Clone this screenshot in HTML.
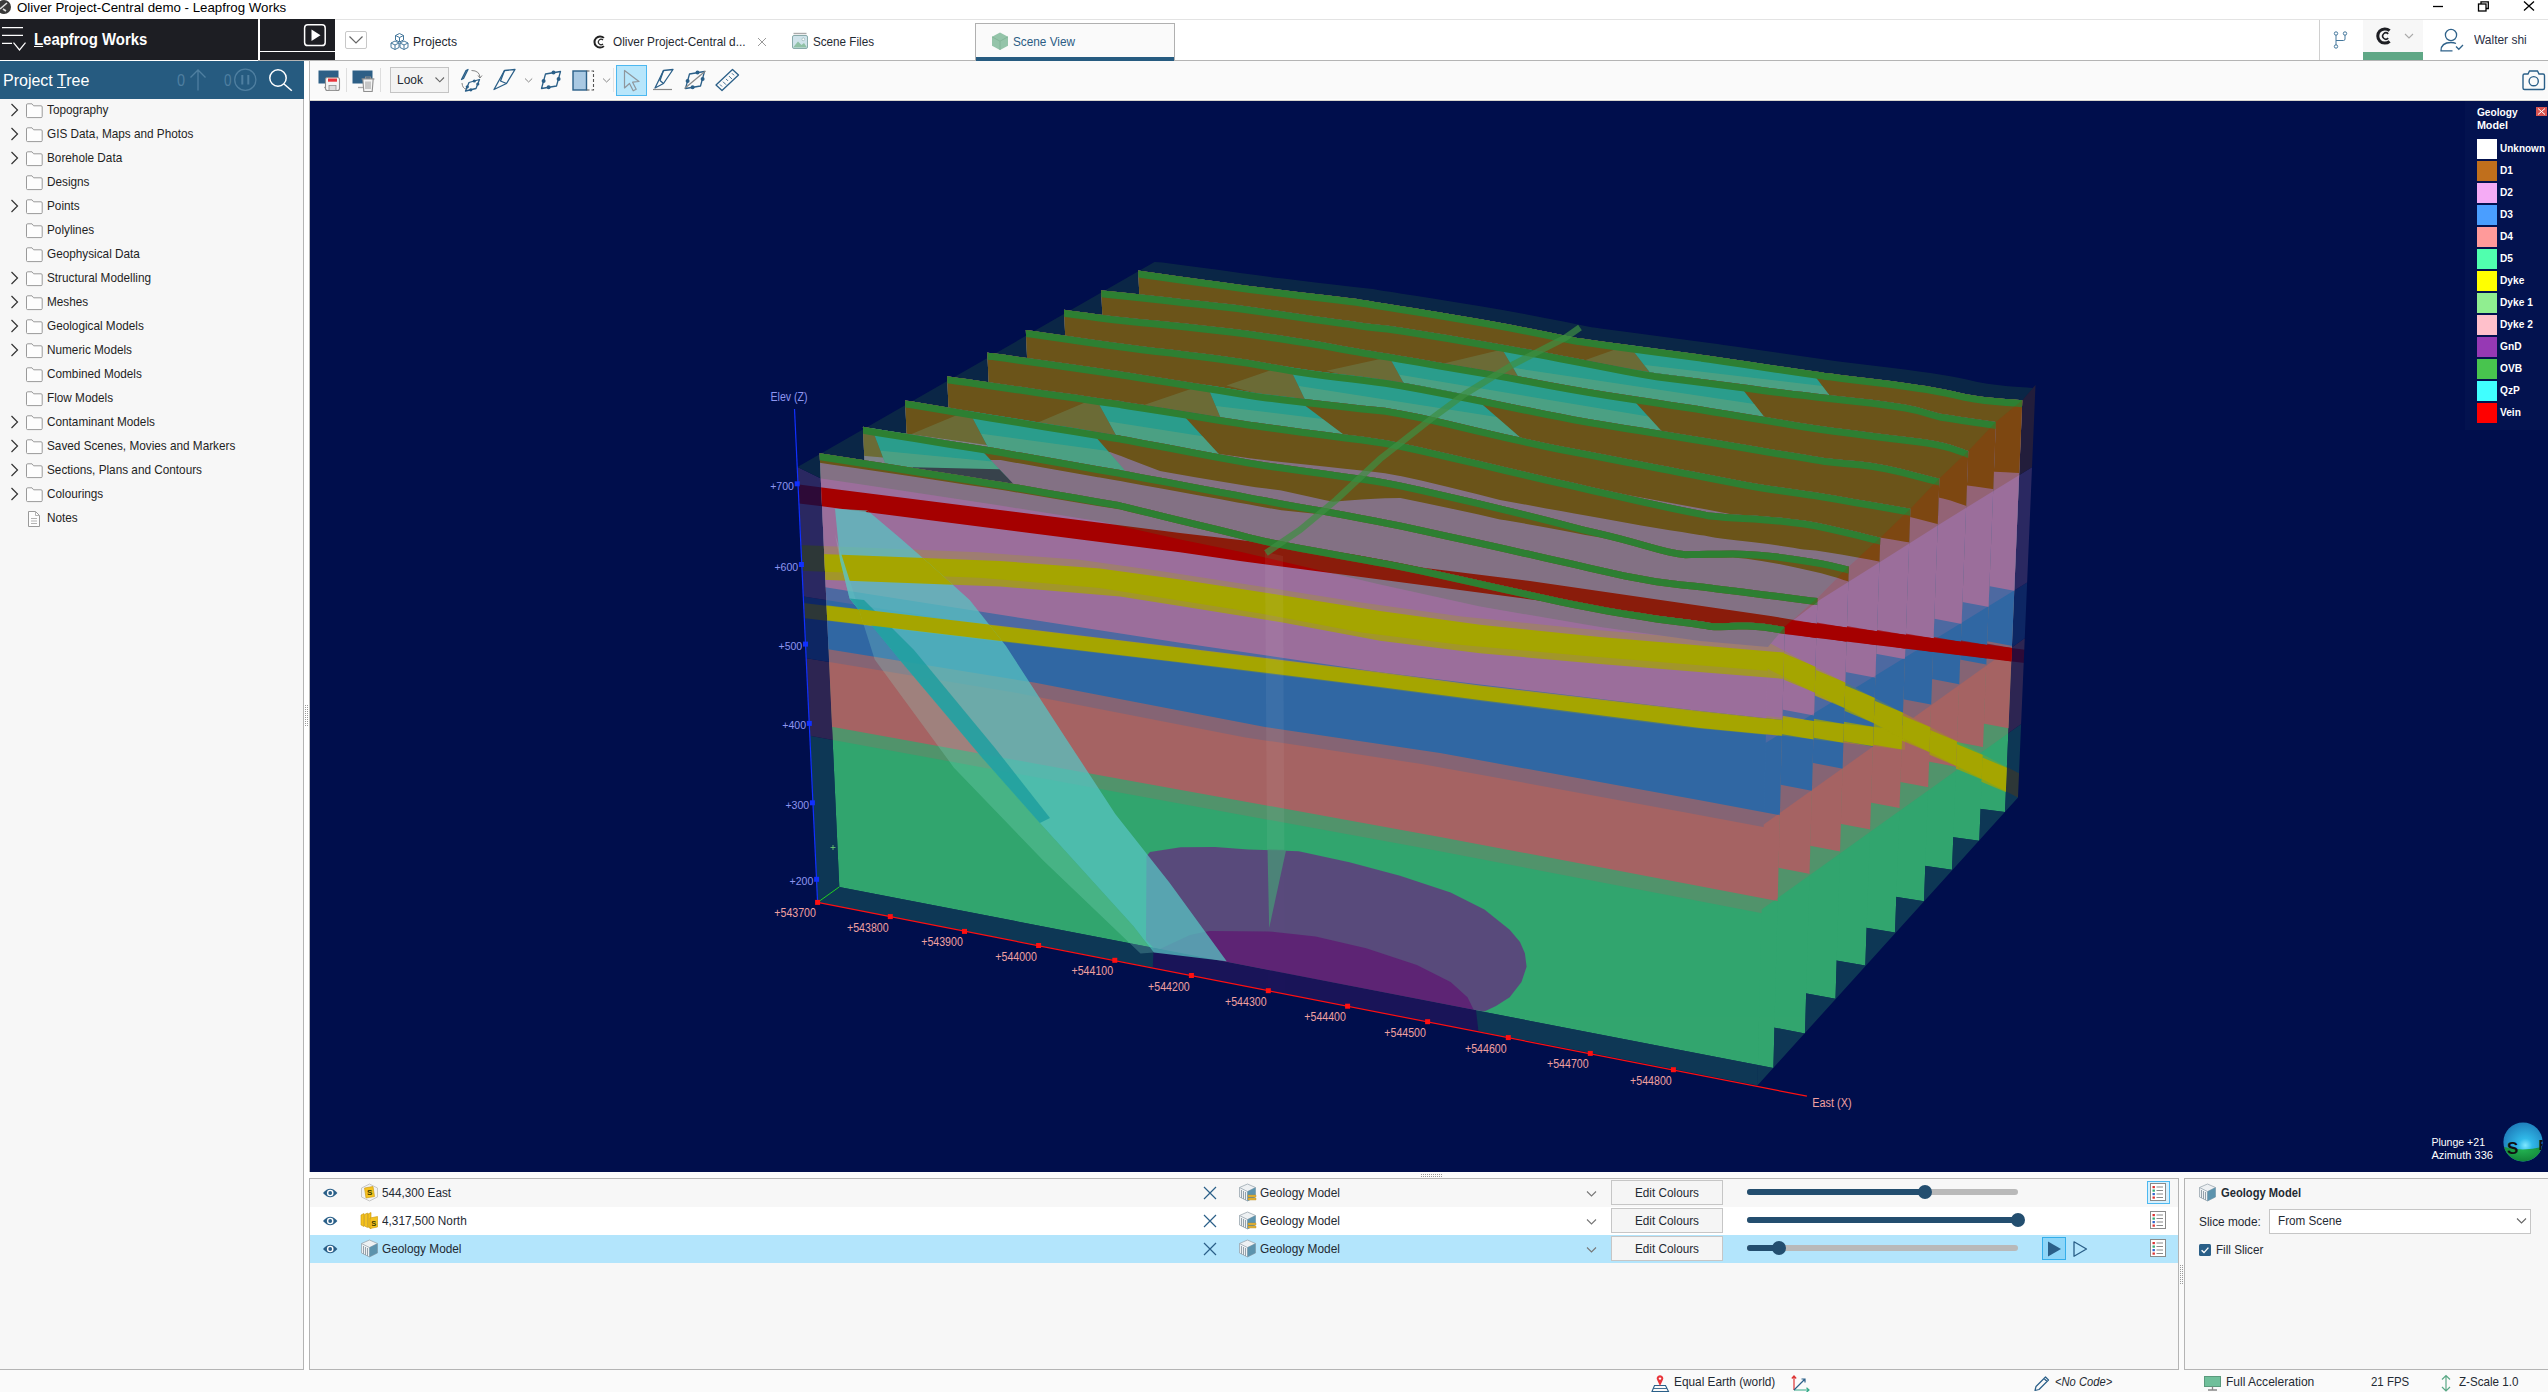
<!DOCTYPE html>
<html lang="en"><head><meta charset="utf-8"><title>Oliver Project-Central demo - Leapfrog Works</title>
<style>
html,body{margin:0;padding:0;background:#fff;}
body{width:2548px;height:1392px;position:relative;overflow:hidden;font-family:"Liberation Sans",sans-serif;}
.t{position:absolute;white-space:nowrap;transform-origin:0 50%;}
.b{position:absolute;display:block;}
svg{overflow:visible}
svg text{font-family:"Liberation Sans",sans-serif;}
</style></head>
<body>
<div class="b" style="left:0px;top:0px;width:2548px;height:19px;background:#ffffff;"></div>
<div class="b" style="left:0px;top:19px;width:2548px;height:1px;background:#e3e3e3;"></div>
<svg class="b" style="left:0px;top:0px;" width="12" height="15" viewBox="0 0 12 15"><circle cx="4" cy="7" r="7" fill="#3a3a3a"/><path d="M0 9 L7 3 M3 9 l3 2" stroke="#ddd" stroke-width="1.6" fill="none"/></svg>
<div class="t" style="left:17.3px;top:1.3px;font-size:13px;line-height:13px;color:#000;transform:scaleX(1.0218);">Oliver Project-Central demo - Leapfrog Works</div>
<svg class="b" style="left:2428px;top:0px;" width="120" height="16" viewBox="0 0 120 16"><path d="M5 6.5 H15" stroke="#000" stroke-width="1.3"/><rect x="50.5" y="4" width="7.5" height="7" fill="none" stroke="#000" stroke-width="1.3"/><path d="M53 4 V1.8 H60.3 V8.5 H58" fill="none" stroke="#000" stroke-width="1.3"/><path d="M96 1.5 L106 10.5 M106 1.5 L96 10.5" stroke="#000" stroke-width="1.3"/></svg>
<div class="b" style="left:0px;top:19px;width:258px;height:41px;background:#1d1e23;"></div>
<div class="b" style="left:259.5px;top:19px;width:75.5px;height:31.5px;background:#1d1e23;"></div>
<div class="b" style="left:259.5px;top:52.3px;width:75.5px;height:7.700000000000003px;background:#1d1e23;"></div>
<svg class="b" style="left:0px;top:22px;" width="30" height="32" viewBox="0 0 30 32"><path d="M2 5.6 H23 M2 13.4 H23 M2 21.4 H12" stroke="#fff" stroke-width="1.2"/><path d="M13.5 20.7 L19.5 28 L25.5 20.7" stroke="#fff" stroke-width="1.2" fill="none"/></svg>
<div class="t" style="left:34.4px;top:31.0px;font-size:17px;line-height:17px;color:#fff;transform:scaleX(0.8777);font-weight:bold;"><u>L</u>eapfrog Works</div>
<svg class="b" style="left:302px;top:22px;" width="26" height="26" viewBox="0 0 26 26"><rect x="2.6" y="2.8" width="20.6" height="20.8" rx="3.2" fill="none" stroke="#fff" stroke-width="1.5"/><path d="M9.5 7.5 L18.5 13.2 L9.5 19 Z" fill="#fff"/></svg>
<div class="b" style="left:335px;top:20px;width:2213px;height:40px;background:#ffffff;"></div>
<div class="b" style="left:258px;top:60px;width:2290px;height:1px;background:#b4b4b4;"></div>
<svg class="b" style="left:343px;top:28px;" width="28" height="26" viewBox="0 0 28 26"><rect x="2.5" y="3.5" width="21" height="17" rx="1.5" fill="#fff" stroke="#c8c8c8" stroke-width="1"/><path d="M6.5 8.5 L13 15 L19.5 8.5" fill="none" stroke="#666" stroke-width="1.2"/></svg>
<svg class="b" style="left:390px;top:32px;" width="20" height="20" viewBox="0 0 20 20"><g fill="#fff" stroke="#44779c" stroke-width="1" stroke-linejoin="round"><path d="M9.5 1.5 L13.5 3.5 V8 L9.5 10 L5.5 8 V3.5 Z M5.5 3.5 L9.5 5.5 L13.5 3.5 M9.5 5.5 V10"/><path d="M5 9 L9 11 V15.5 L5 17.5 L1 15.5 V11 Z M1 11 L5 13 L9 11 M5 13 V17.5"/><path d="M14 9 L18 11 V15.5 L14 17.5 L10 15.5 V11 Z M10 11 L14 13 L18 11 M14 13 V17.5"/></g></svg>
<div class="t" style="left:413.0px;top:34.8px;font-size:13px;line-height:13px;color:#1f2a33;transform:scaleX(0.9370);">Projects</div>
<svg class="b" style="left:591px;top:33px;" width="18" height="18" viewBox="0 0 18 18"><path d="M13.6 4.2 A6.6 6.6 0 1 0 13.6 13.8 L12.2 12.4 A4.6 4.6 0 1 1 12.2 5.6 Z" fill="#222"/><path d="M12.4 6.6 A3.3 3.3 0 1 0 12.4 11.4 L11.6 10.6 A2.2 2.2 0 1 1 11.6 7.4 Z" fill="#222"/></svg>
<div class="t" style="left:613.0px;top:34.8px;font-size:13px;line-height:13px;color:#1f2a33;transform:scaleX(0.9079);">Oliver Project-Central d...</div>
<svg class="b" style="left:756px;top:36px;" width="12" height="12" viewBox="0 0 12 12"><path d="M2 2 L10 10 M10 2 L2 10" stroke="#999" stroke-width="1"/></svg>
<svg class="b" style="left:791px;top:32px;" width="18" height="18" viewBox="0 0 18 18"><rect x="1.5" y="3.5" width="15" height="13" rx="1.5" fill="#cfe3ea" stroke="#8aa" stroke-width="1"/><path d="M2.5 1.5 H15.5" stroke="#aaa" stroke-width="1.4"/><path d="M2 15.5 L7 9.5 L10.5 13 L13 11 L16 15.5 Z" fill="#8fc1a5"/><circle cx="12.3" cy="7.3" r="1.4" fill="#fff" stroke="#8aa" stroke-width=".6"/></svg>
<div class="t" style="left:813.0px;top:34.8px;font-size:13px;line-height:13px;color:#1f2a33;transform:scaleX(0.8981);">Scene Files</div>
<div class="b" style="left:975px;top:23px;width:200px;height:38px;background:#fafafa;border:1px solid #b0b0b0;box-sizing:border-box;"></div>
<div class="b" style="left:976px;top:57px;width:198px;height:4px;background:#265b80;"></div>
<svg class="b" style="left:991px;top:32px;" width="18" height="19" viewBox="0 0 18 19"><path d="M9 0.5 L17 4.8 V13.8 L9 18 L1 13.8 V4.8 Z" fill="#94c4a9"/><path d="M1 4.8 L9 9.2 L17 4.8 M9 9.2 V18" stroke="#7fb294" stroke-width="0.8" fill="none"/></svg>
<div class="t" style="left:1013.0px;top:34.8px;font-size:13px;line-height:13px;color:#2b5c84;transform:scaleX(0.9062);">Scene View</div>
<div class="b" style="left:2319px;top:20px;width:1px;height:40px;background:#d0d0d0;"></div>
<svg class="b" style="left:2330px;top:28px;" width="22" height="24" viewBox="0 0 22 24"><g fill="#fff" stroke="#44779c" stroke-width="1"><path d="M6 6 V18 M6 12.5 H13.5 Q15 12.5 15 11 V6" fill="none"/><circle cx="6" cy="5.5" r="1.7"/><circle cx="15" cy="5.5" r="1.7"/><circle cx="6" cy="18.5" r="1.7"/></g></svg>
<div class="b" style="left:2363px;top:20px;width:60px;height:32px;background:#f7f7f7;"></div>
<div class="b" style="left:2363px;top:52px;width:60px;height:8px;background:#5fa786;"></div>
<svg class="b" style="left:2374px;top:25px;" width="22" height="22" viewBox="0 0 22 22"><path d="M16.6 4.6 A8.6 8.6 0 1 0 16.6 17.4 L14.6 15.2 A5.6 5.6 0 1 1 14.6 6.8 Z" fill="#1d1e23"/><path d="M14.8 8.2 A4 4 0 1 0 14.8 13.8 L13.6 12.6 A2.4 2.4 0 1 1 13.6 9.4 Z" fill="#1d1e23"/></svg>
<svg class="b" style="left:2403px;top:31px;" width="12" height="10" viewBox="0 0 12 10"><path d="M2 3 L6 7 L10 3" fill="none" stroke="#aaa" stroke-width="1.1"/></svg>
<svg class="b" style="left:2438px;top:27px;" width="28" height="26" viewBox="0 0 28 26"><g fill="none" stroke="#2f628a" stroke-width="1.3"><circle cx="13" cy="8" r="5.6"/><path d="M14.5 23.8 H3 Q3 15.5 13 15.5 Q16 15.5 18 16.5"/><path d="M18 19.5 L20.8 22.3 L25 18"/></g></svg>
<div class="t" style="left:2474.0px;top:33.0px;font-size:13px;line-height:13px;color:#2a2f45;transform:scaleX(0.9196);">Walter shi</div>
<div class="b" style="left:0px;top:61px;width:304px;height:38px;background:#265b80;"></div>
<div class="t" style="left:2.7px;top:73.0px;font-size:16px;line-height:16px;color:#fff;transform:scaleX(1.0005);">Project <u>T</u>ree</div>
<div class="t" style="left:176.8px;top:73.0px;font-size:16px;line-height:16px;color:#4f7fa0;transform:scaleX(0.8990);">0</div>
<svg class="b" style="left:188px;top:66px;" width="20" height="28" viewBox="0 0 20 28"><path d="M10 24.5 V4 M2.5 11.5 L10 4 L17.5 11.5" fill="none" stroke="#4f7fa0" stroke-width="1.3"/></svg>
<div class="t" style="left:224.0px;top:73.0px;font-size:16px;line-height:16px;color:#4f7fa0;transform:scaleX(0.8428);">0</div>
<svg class="b" style="left:233px;top:67px;" width="26" height="26" viewBox="0 0 26 26"><circle cx="12.3" cy="12.8" r="10.6" fill="none" stroke="#4f7fa0" stroke-width="1.3"/><path d="M9.3 8 V17.6 M15.3 8 V17.6" stroke="#4f7fa0" stroke-width="2"/></svg>
<svg class="b" style="left:266px;top:66px;" width="30" height="30" viewBox="0 0 30 30"><circle cx="12" cy="12" r="8.2" fill="none" stroke="#fff" stroke-width="1.5"/><path d="M18 18 L25.8 24.8" stroke="#fff" stroke-width="1.5"/></svg>
<div class="b" style="left:0px;top:99px;width:304px;height:1271px;background:#f7f7f7;border-right:1px solid #b4b4b4;border-bottom:1px solid #b4b4b4;box-sizing:border-box;"></div>
<svg class="b" style="left:8px;top:102px;" width="12" height="16" viewBox="0 0 12 16"><path d="M3.5 2 L9.5 8 L3.5 14" fill="none" stroke="#333" stroke-width="1.2"/></svg>
<svg class="b" style="left:25px;top:102px;" width="19" height="18" viewBox="0 0 19 18"><path d="M1.5 14.5 V3 Q1.5 1.8 2.7 1.8 H7 L8.6 3.8 H16 Q17.2 3.8 17.2 5 V14.5 Q17.2 15.6 16 15.6 H2.7 Q1.5 15.6 1.5 14.5 Z" fill="#fdfdfd" stroke="#9a9a9a" stroke-width="1"/></svg>
<div class="t" style="left:47.0px;top:103.0px;font-size:13px;line-height:13px;color:#1f1f1f;transform:scaleX(0.9050);">Topography</div>
<svg class="b" style="left:8px;top:126px;" width="12" height="16" viewBox="0 0 12 16"><path d="M3.5 2 L9.5 8 L3.5 14" fill="none" stroke="#333" stroke-width="1.2"/></svg>
<svg class="b" style="left:25px;top:126px;" width="19" height="18" viewBox="0 0 19 18"><path d="M1.5 14.5 V3 Q1.5 1.8 2.7 1.8 H7 L8.6 3.8 H16 Q17.2 3.8 17.2 5 V14.5 Q17.2 15.6 16 15.6 H2.7 Q1.5 15.6 1.5 14.5 Z" fill="#fdfdfd" stroke="#9a9a9a" stroke-width="1"/></svg>
<div class="t" style="left:47.0px;top:127.0px;font-size:13px;line-height:13px;color:#1f1f1f;transform:scaleX(0.9050);">GIS Data, Maps and Photos</div>
<svg class="b" style="left:8px;top:150px;" width="12" height="16" viewBox="0 0 12 16"><path d="M3.5 2 L9.5 8 L3.5 14" fill="none" stroke="#333" stroke-width="1.2"/></svg>
<svg class="b" style="left:25px;top:150px;" width="19" height="18" viewBox="0 0 19 18"><path d="M1.5 14.5 V3 Q1.5 1.8 2.7 1.8 H7 L8.6 3.8 H16 Q17.2 3.8 17.2 5 V14.5 Q17.2 15.6 16 15.6 H2.7 Q1.5 15.6 1.5 14.5 Z" fill="#fdfdfd" stroke="#9a9a9a" stroke-width="1"/></svg>
<div class="t" style="left:47.0px;top:151.0px;font-size:13px;line-height:13px;color:#1f1f1f;transform:scaleX(0.9050);">Borehole Data</div>
<svg class="b" style="left:25px;top:174px;" width="19" height="18" viewBox="0 0 19 18"><path d="M1.5 14.5 V3 Q1.5 1.8 2.7 1.8 H7 L8.6 3.8 H16 Q17.2 3.8 17.2 5 V14.5 Q17.2 15.6 16 15.6 H2.7 Q1.5 15.6 1.5 14.5 Z" fill="#fdfdfd" stroke="#9a9a9a" stroke-width="1"/></svg>
<div class="t" style="left:47.0px;top:175.0px;font-size:13px;line-height:13px;color:#1f1f1f;transform:scaleX(0.9050);">Designs</div>
<svg class="b" style="left:8px;top:198px;" width="12" height="16" viewBox="0 0 12 16"><path d="M3.5 2 L9.5 8 L3.5 14" fill="none" stroke="#333" stroke-width="1.2"/></svg>
<svg class="b" style="left:25px;top:198px;" width="19" height="18" viewBox="0 0 19 18"><path d="M1.5 14.5 V3 Q1.5 1.8 2.7 1.8 H7 L8.6 3.8 H16 Q17.2 3.8 17.2 5 V14.5 Q17.2 15.6 16 15.6 H2.7 Q1.5 15.6 1.5 14.5 Z" fill="#fdfdfd" stroke="#9a9a9a" stroke-width="1"/></svg>
<div class="t" style="left:47.0px;top:199.0px;font-size:13px;line-height:13px;color:#1f1f1f;transform:scaleX(0.9050);">Points</div>
<svg class="b" style="left:25px;top:222px;" width="19" height="18" viewBox="0 0 19 18"><path d="M1.5 14.5 V3 Q1.5 1.8 2.7 1.8 H7 L8.6 3.8 H16 Q17.2 3.8 17.2 5 V14.5 Q17.2 15.6 16 15.6 H2.7 Q1.5 15.6 1.5 14.5 Z" fill="#fdfdfd" stroke="#9a9a9a" stroke-width="1"/></svg>
<div class="t" style="left:47.0px;top:223.0px;font-size:13px;line-height:13px;color:#1f1f1f;transform:scaleX(0.9050);">Polylines</div>
<svg class="b" style="left:25px;top:246px;" width="19" height="18" viewBox="0 0 19 18"><path d="M1.5 14.5 V3 Q1.5 1.8 2.7 1.8 H7 L8.6 3.8 H16 Q17.2 3.8 17.2 5 V14.5 Q17.2 15.6 16 15.6 H2.7 Q1.5 15.6 1.5 14.5 Z" fill="#fdfdfd" stroke="#9a9a9a" stroke-width="1"/></svg>
<div class="t" style="left:47.0px;top:247.0px;font-size:13px;line-height:13px;color:#1f1f1f;transform:scaleX(0.9050);">Geophysical Data</div>
<svg class="b" style="left:8px;top:270px;" width="12" height="16" viewBox="0 0 12 16"><path d="M3.5 2 L9.5 8 L3.5 14" fill="none" stroke="#333" stroke-width="1.2"/></svg>
<svg class="b" style="left:25px;top:270px;" width="19" height="18" viewBox="0 0 19 18"><path d="M1.5 14.5 V3 Q1.5 1.8 2.7 1.8 H7 L8.6 3.8 H16 Q17.2 3.8 17.2 5 V14.5 Q17.2 15.6 16 15.6 H2.7 Q1.5 15.6 1.5 14.5 Z" fill="#fdfdfd" stroke="#9a9a9a" stroke-width="1"/></svg>
<div class="t" style="left:47.0px;top:271.0px;font-size:13px;line-height:13px;color:#1f1f1f;transform:scaleX(0.9050);">Structural Modelling</div>
<svg class="b" style="left:8px;top:294px;" width="12" height="16" viewBox="0 0 12 16"><path d="M3.5 2 L9.5 8 L3.5 14" fill="none" stroke="#333" stroke-width="1.2"/></svg>
<svg class="b" style="left:25px;top:294px;" width="19" height="18" viewBox="0 0 19 18"><path d="M1.5 14.5 V3 Q1.5 1.8 2.7 1.8 H7 L8.6 3.8 H16 Q17.2 3.8 17.2 5 V14.5 Q17.2 15.6 16 15.6 H2.7 Q1.5 15.6 1.5 14.5 Z" fill="#fdfdfd" stroke="#9a9a9a" stroke-width="1"/></svg>
<div class="t" style="left:47.0px;top:295.0px;font-size:13px;line-height:13px;color:#1f1f1f;transform:scaleX(0.9050);">Meshes</div>
<svg class="b" style="left:8px;top:318px;" width="12" height="16" viewBox="0 0 12 16"><path d="M3.5 2 L9.5 8 L3.5 14" fill="none" stroke="#333" stroke-width="1.2"/></svg>
<svg class="b" style="left:25px;top:318px;" width="19" height="18" viewBox="0 0 19 18"><path d="M1.5 14.5 V3 Q1.5 1.8 2.7 1.8 H7 L8.6 3.8 H16 Q17.2 3.8 17.2 5 V14.5 Q17.2 15.6 16 15.6 H2.7 Q1.5 15.6 1.5 14.5 Z" fill="#fdfdfd" stroke="#9a9a9a" stroke-width="1"/></svg>
<div class="t" style="left:47.0px;top:319.0px;font-size:13px;line-height:13px;color:#1f1f1f;transform:scaleX(0.9050);">Geological Models</div>
<svg class="b" style="left:8px;top:342px;" width="12" height="16" viewBox="0 0 12 16"><path d="M3.5 2 L9.5 8 L3.5 14" fill="none" stroke="#333" stroke-width="1.2"/></svg>
<svg class="b" style="left:25px;top:342px;" width="19" height="18" viewBox="0 0 19 18"><path d="M1.5 14.5 V3 Q1.5 1.8 2.7 1.8 H7 L8.6 3.8 H16 Q17.2 3.8 17.2 5 V14.5 Q17.2 15.6 16 15.6 H2.7 Q1.5 15.6 1.5 14.5 Z" fill="#fdfdfd" stroke="#9a9a9a" stroke-width="1"/></svg>
<div class="t" style="left:47.0px;top:343.0px;font-size:13px;line-height:13px;color:#1f1f1f;transform:scaleX(0.9050);">Numeric Models</div>
<svg class="b" style="left:25px;top:366px;" width="19" height="18" viewBox="0 0 19 18"><path d="M1.5 14.5 V3 Q1.5 1.8 2.7 1.8 H7 L8.6 3.8 H16 Q17.2 3.8 17.2 5 V14.5 Q17.2 15.6 16 15.6 H2.7 Q1.5 15.6 1.5 14.5 Z" fill="#fdfdfd" stroke="#9a9a9a" stroke-width="1"/></svg>
<div class="t" style="left:47.0px;top:367.0px;font-size:13px;line-height:13px;color:#1f1f1f;transform:scaleX(0.9050);">Combined Models</div>
<svg class="b" style="left:25px;top:390px;" width="19" height="18" viewBox="0 0 19 18"><path d="M1.5 14.5 V3 Q1.5 1.8 2.7 1.8 H7 L8.6 3.8 H16 Q17.2 3.8 17.2 5 V14.5 Q17.2 15.6 16 15.6 H2.7 Q1.5 15.6 1.5 14.5 Z" fill="#fdfdfd" stroke="#9a9a9a" stroke-width="1"/></svg>
<div class="t" style="left:47.0px;top:391.0px;font-size:13px;line-height:13px;color:#1f1f1f;transform:scaleX(0.9050);">Flow Models</div>
<svg class="b" style="left:8px;top:414px;" width="12" height="16" viewBox="0 0 12 16"><path d="M3.5 2 L9.5 8 L3.5 14" fill="none" stroke="#333" stroke-width="1.2"/></svg>
<svg class="b" style="left:25px;top:414px;" width="19" height="18" viewBox="0 0 19 18"><path d="M1.5 14.5 V3 Q1.5 1.8 2.7 1.8 H7 L8.6 3.8 H16 Q17.2 3.8 17.2 5 V14.5 Q17.2 15.6 16 15.6 H2.7 Q1.5 15.6 1.5 14.5 Z" fill="#fdfdfd" stroke="#9a9a9a" stroke-width="1"/></svg>
<div class="t" style="left:47.0px;top:415.0px;font-size:13px;line-height:13px;color:#1f1f1f;transform:scaleX(0.9050);">Contaminant Models</div>
<svg class="b" style="left:8px;top:438px;" width="12" height="16" viewBox="0 0 12 16"><path d="M3.5 2 L9.5 8 L3.5 14" fill="none" stroke="#333" stroke-width="1.2"/></svg>
<svg class="b" style="left:25px;top:438px;" width="19" height="18" viewBox="0 0 19 18"><path d="M1.5 14.5 V3 Q1.5 1.8 2.7 1.8 H7 L8.6 3.8 H16 Q17.2 3.8 17.2 5 V14.5 Q17.2 15.6 16 15.6 H2.7 Q1.5 15.6 1.5 14.5 Z" fill="#fdfdfd" stroke="#9a9a9a" stroke-width="1"/></svg>
<div class="t" style="left:47.0px;top:439.0px;font-size:13px;line-height:13px;color:#1f1f1f;transform:scaleX(0.9050);">Saved Scenes, Movies and Markers</div>
<svg class="b" style="left:8px;top:462px;" width="12" height="16" viewBox="0 0 12 16"><path d="M3.5 2 L9.5 8 L3.5 14" fill="none" stroke="#333" stroke-width="1.2"/></svg>
<svg class="b" style="left:25px;top:462px;" width="19" height="18" viewBox="0 0 19 18"><path d="M1.5 14.5 V3 Q1.5 1.8 2.7 1.8 H7 L8.6 3.8 H16 Q17.2 3.8 17.2 5 V14.5 Q17.2 15.6 16 15.6 H2.7 Q1.5 15.6 1.5 14.5 Z" fill="#fdfdfd" stroke="#9a9a9a" stroke-width="1"/></svg>
<div class="t" style="left:47.0px;top:463.0px;font-size:13px;line-height:13px;color:#1f1f1f;transform:scaleX(0.9050);">Sections, Plans and Contours</div>
<svg class="b" style="left:8px;top:486px;" width="12" height="16" viewBox="0 0 12 16"><path d="M3.5 2 L9.5 8 L3.5 14" fill="none" stroke="#333" stroke-width="1.2"/></svg>
<svg class="b" style="left:25px;top:486px;" width="19" height="18" viewBox="0 0 19 18"><path d="M1.5 14.5 V3 Q1.5 1.8 2.7 1.8 H7 L8.6 3.8 H16 Q17.2 3.8 17.2 5 V14.5 Q17.2 15.6 16 15.6 H2.7 Q1.5 15.6 1.5 14.5 Z" fill="#fdfdfd" stroke="#9a9a9a" stroke-width="1"/></svg>
<div class="t" style="left:47.0px;top:487.0px;font-size:13px;line-height:13px;color:#1f1f1f;transform:scaleX(0.9050);">Colourings</div>
<svg class="b" style="left:26px;top:510px;" width="16" height="18" viewBox="0 0 16 18"><path d="M2.5 1.5 H9.5 L13.5 5.5 V16.5 H2.5 Z" fill="#fdfdfd" stroke="#9a9a9a" stroke-width="1"/><path d="M9.5 1.5 V5.5 H13.5 M5 8.5 H11 M5 11 H11 M5 13.5 H11" fill="none" stroke="#aaa" stroke-width=".9"/></svg>
<div class="t" style="left:47.0px;top:511.0px;font-size:13px;line-height:13px;color:#1f1f1f;transform:scaleX(0.9050);">Notes</div>
<div class="b" style="left:304px;top:61px;width:6px;height:1309px;background:#ffffff;"></div>
<svg class="b" style="left:304px;top:704px;" width="6" height="24" viewBox="0 0 6 24"><path d="M1.5 1 V23 M3.5 1 V23" stroke="#999" stroke-width="1" stroke-dasharray="1 1"/></svg>
<div class="b" style="left:310px;top:61px;width:2238px;height:39px;background:#fafafa;"></div>
<svg class="b" style="left:316px;top:68px;" width="28" height="28" viewBox="0 0 28 28"><rect x="2.5" y="2.5" width="20" height="13" fill="#2d5f86"/><path d="M8 19.5 H17" stroke="#aaa" stroke-width="1.3"/><rect x="9.5" y="9.5" width="14" height="13" rx="2" fill="#f4f4f4" stroke="#8f8f8f" stroke-width="1.1"/><rect x="12" y="10.5" width="9" height="3.2" fill="#e8343a"/><rect x="13" y="17.5" width="7" height="5" fill="#ddd" stroke="#8f8f8f" stroke-width=".8"/></svg>
<div class="b" style="left:346px;top:68px;width:1px;height:24px;background:#dedede;"></div>
<svg class="b" style="left:350px;top:68px;" width="28" height="28" viewBox="0 0 28 28"><rect x="2.5" y="2.5" width="20" height="13" fill="#2d5f86"/><path d="M8 19.5 H14" stroke="#aaa" stroke-width="1.3"/><path d="M11.5 11 H24.5 M15.5 11 V9 H20.5 V11" fill="none" stroke="#8f8f8f" stroke-width="1.1"/><path d="M12.8 11 L13.8 23.5 H22.2 L23.2 11 Z" fill="#f4f4f4" stroke="#8f8f8f" stroke-width="1.1"/><path d="M16 13.5 V21 M18 13.5 V21 M20 13.5 V21" stroke="#8f8f8f" stroke-width=".9"/></svg>
<div class="b" style="left:380px;top:68px;width:1px;height:24px;background:#dedede;"></div>
<div class="b" style="left:390px;top:67px;width:59px;height:26px;background:#f3f3f3;border:1px solid #c4c4c4;box-sizing:border-box;"></div>
<div class="t" style="left:397.0px;top:73.0px;font-size:13px;line-height:13px;color:#1f2a33;transform:scaleX(0.9223);">Look</div>
<svg class="b" style="left:433px;top:75px;" width="14" height="10" viewBox="0 0 14 10"><path d="M2.5 2.5 L6.8 6.8 L11 2.5" fill="none" stroke="#666" stroke-width="1.1"/></svg>
<svg class="b" style="left:459px;top:66px;" width="28" height="30" viewBox="0 0 28 30"><g fill="none" stroke="#2a5f88" stroke-width="1.3" stroke-linejoin="round"><path d="M9 3.5 L4.5 12.5 L2.5 13.5 L7 4.5 Z"/><path d="M10 16.5 L20.5 13.5 L17 22.5 L6.5 25 Z"/></g><g fill="#2a5f88"><circle cx="15.3" cy="15" r="1.6"/><circle cx="18.8" cy="18" r="1.6"/><circle cx="11.8" cy="23.8" r="1.6"/><circle cx="8.3" cy="20.8" r="1.6"/></g><path d="M12.5 4.5 Q20.5 4.5 21 11.5 M19 9.5 L21 12 L23 9.5 M3 17 Q3.5 22.5 7 23" fill="none" stroke="#777" stroke-width=".9"/></svg>
<svg class="b" style="left:491px;top:66px;" width="28" height="30" viewBox="0 0 28 30"><g fill="none" stroke="#2a5f88" stroke-width="1.3" stroke-linejoin="round"><path d="M13.5 4.5 L24 3.5 L15.5 17.5 L3 23.5 Z"/><path d="M13.5 4.5 L9.5 15 L15.5 17.5"/></g></svg>
<svg class="b" style="left:523px;top:76px;" width="12" height="10" viewBox="0 0 12 10"><path d="M2 2.5 L5.6 6 L9.2 2.5" fill="none" stroke="#888" stroke-width="1"/></svg>
<svg class="b" style="left:538px;top:66px;" width="26" height="30" viewBox="0 0 26 30"><g fill="none" stroke="#2a5f88" stroke-width="1.3" stroke-linejoin="round"><path d="M7.5 8 L22.5 5.5 L18.5 20 L3.5 22.5 Z"/></g><g fill="#2a5f88"><circle cx="15.5" cy="6.5" r="2"/><circle cx="20.6" cy="13" r="2"/><circle cx="10.6" cy="21.3" r="2"/><circle cx="5.6" cy="15" r="2"/></g></svg>
<svg class="b" style="left:570px;top:66px;" width="28" height="30" viewBox="0 0 28 30"><rect x="3" y="5" width="13.5" height="19" fill="#a9c9e3" stroke="#2a5f88" stroke-width="1.4"/><path d="M16.5 5 H23.5 V24 H16.5" fill="none" stroke="#555" stroke-width="1.1" stroke-dasharray="3 2"/></svg>
<svg class="b" style="left:601px;top:76px;" width="12" height="10" viewBox="0 0 12 10"><path d="M2 2.5 L5.6 6 L9.2 2.5" fill="none" stroke="#888" stroke-width="1"/></svg>
<div class="b" style="left:613px;top:68px;width:1px;height:24px;background:#e4e4e4;"></div>
<div class="b" style="left:616px;top:65px;width:31px;height:31px;background:#b8e6fb;border:1px solid #4db8f0;box-sizing:border-box;"></div>
<svg class="b" style="left:620px;top:68px;" width="24" height="26" viewBox="0 0 24 26"><path d="M4.5 2.5 L4.5 20 L9.5 15.5 L13.2 22.8 L16.2 21.3 L12.6 14.2 L19 13.5 Z" fill="none" stroke="#8f969c" stroke-width="1.2" stroke-linejoin="round"/></svg>
<svg class="b" style="left:650px;top:66px;" width="26" height="30" viewBox="0 0 26 30"><g fill="none" stroke="#2a5f88" stroke-width="1.3" stroke-linejoin="round"><path d="M13.5 4.5 L23 3.5 L13.5 17.5 L5 22 Z"/><path d="M13.5 4.5 L10 14.5 L13.5 17.5"/></g><path d="M3 23.5 H22" stroke="#888" stroke-width="1.2"/></svg>
<svg class="b" style="left:682px;top:66px;" width="26" height="30" viewBox="0 0 26 30"><g fill="none" stroke="#2a5f88" stroke-width="1.3" stroke-linejoin="round"><path d="M7.5 8 L22.5 5.5 L18.5 20 L3.5 22.5 Z"/></g><g fill="#2a5f88"><circle cx="15.5" cy="6.5" r="2"/><circle cx="20.6" cy="13" r="2"/><circle cx="10.6" cy="21.3" r="2"/><circle cx="5.6" cy="15" r="2"/></g><path d="M2.5 22.5 L23.5 5" stroke="#888" stroke-width="1.2"/></svg>
<svg class="b" style="left:713px;top:66px;" width="28" height="30" viewBox="0 0 28 30"><g fill="none" stroke="#2a5f88" stroke-width="1.3" stroke-linejoin="round"><path d="M3 19 L19.5 3.5 L25.5 9 L9 24.5 Z"/></g><path d="M7 18.5 l2 2 M10 15.7 l3 3 M13 12.9 l2 2 M16 10.1 l3 3 M19 7.3 l2 2" stroke="#2a5f88" stroke-width=".9"/></svg>
<svg class="b" style="left:2520px;top:66px;" width="28" height="28" viewBox="0 0 28 28"><path d="M4.5 8 H8 L9.5 5 H17.5 L19 8 H23 Q24.5 8 24.5 9.5 V22 Q24.5 23.5 23 23.5 H4.5 Q3 23.5 3 22 V9.5 Q3 8 4.5 8 Z" fill="none" stroke="#2a5f88" stroke-width="1.4"/><circle cx="13.7" cy="15.2" r="4.6" fill="none" stroke="#2a5f88" stroke-width="1.4"/></svg>
<svg class="b" style="left:310px;top:100px;overflow:hidden" width="2238" height="1072" viewBox="310 100 2238 1072"><rect x="310" y="100" width="2238" height="1072" fill="#000e4c"/>
<rect x="2465" y="100" width="83" height="330" fill="#03124f"/>
<clipPath id="c8"><polygon points="1138.2,270.6 1144.6,271.5 1157.3,273.2 1176.4,275.9 1201.8,279.4 1222.5,282.2 1238.4,284.4 1249.4,285.9 1255.7,286.8 1266.0,288.1 1280.1,289.8 1298.2,291.9 1320.2,294.5 1337.1,296.5 1349.0,298.0 1355.7,298.8 1357.4,299.1 1361.2,299.7 1367.1,300.6 1375.0,301.9 1385.0,303.5 1398.8,305.7 1416.4,308.6 1437.7,312.1 1462.9,316.2 1486.4,320.3 1508.4,324.3 1528.9,328.2 1547.7,332.0 1562.1,334.9 1572.0,336.9 1577.5,338.0 1578.5,338.1 1586.8,339.3 1602.3,341.4 1625.0,344.4 1655.0,348.5 1677.6,351.5 1692.8,353.5 1700.7,354.6 1701.1,354.7 1708.8,355.8 1723.8,358.0 1746.1,361.3 1775.7,365.7 1798.3,369.0 1814.0,371.3 1822.8,372.6 1824.7,372.9 1830.8,373.6 1841.1,374.9 1855.7,376.7 1874.6,379.0 1891.1,381.1 1905.1,383.0 1916.8,384.7 1926.1,386.1 1935.4,387.8 1944.9,389.6 1954.4,391.5 1964.0,393.7 1973.9,395.5 1984.2,397.0 1994.8,398.1 2005.8,399.0 2014.1,399.6 2019.6,400.0 2022.3,400.2 2005.0,812.0 1157.9,704.4"/></clipPath><g clip-path="url(#c8)"><polygon points="1138.2,270.6 1144.6,271.5 1157.3,273.2 1176.4,275.9 1201.8,279.4 1222.5,282.2 1238.4,284.4 1249.4,285.9 1255.7,286.8 1266.0,288.1 1280.1,289.8 1298.2,291.9 1320.2,294.5 1337.1,296.5 1349.0,298.0 1355.7,298.8 1357.4,299.1 1361.2,299.7 1367.1,300.6 1375.0,301.9 1385.0,303.5 1398.8,305.7 1416.4,308.6 1437.7,312.1 1462.9,316.2 1486.4,320.3 1508.4,324.3 1528.9,328.2 1547.7,332.0 1562.1,334.9 1572.0,336.9 1577.5,338.0 1578.5,338.1 1586.8,339.3 1602.3,341.4 1625.0,344.4 1655.0,348.5 1677.6,351.5 1692.8,353.5 1700.7,354.6 1701.1,354.7 1708.8,355.8 1723.8,358.0 1746.1,361.3 1775.7,365.7 1798.3,369.0 1814.0,371.3 1822.8,372.6 1824.7,372.9 1830.8,373.6 1841.1,374.9 1855.7,376.7 1874.6,379.0 1891.1,381.1 1905.1,383.0 1916.8,384.7 1926.1,386.1 1935.4,387.8 1944.9,389.6 1954.4,391.5 1964.0,393.7 1973.9,395.5 1984.2,397.0 1994.8,398.1 2005.8,399.0 2014.1,399.6 2019.6,400.0 2022.3,400.2 2005.0,812.0 1157.9,704.4" fill="#32a56e"/><polygon points="700.0,200.0 2100.0,200.0 2100.0,745.7 2025.3,731.5 1981.9,723.2 1938.4,704.1 1702.1,674.7 1138.6,610.1 700.0,559.8" fill="#a56363"/><polygon points="700.0,200.0 2100.0,200.0 2100.0,662.6 2025.3,648.4 1981.9,640.2 1938.4,618.1 1702.1,590.8 1543.1,578.2 1333.1,551.6 1138.6,533.3 700.0,491.9" fill="#3068a4"/><polygon points="700.0,200.0 2100.0,200.0 2100.0,607.1 2025.3,592.9 1981.9,584.7 1938.4,548.8 1738.5,539.2 1647.6,534.6 1465.8,520.6 1138.6,492.0 700.0,453.6" fill="#9c6e9c"/><polygon points="700.0,622.2 820.0,636.5 1180.0,679.4 1380.0,704.2 1480.0,717.5 1700.0,743.0 1783.0,752.0 1981.9,765.2 2025.3,772.6 2100.0,785.3 2100.0,785.3 2025.3,772.6 1981.9,765.2 1783.0,768.0 1700.0,760.0 1480.0,732.0 1380.0,719.0 1180.0,694.2 820.0,651.5 700.0,637.3" fill="#a5a500"/><polygon points="700.0,621.3 820.0,626.0 1000.0,633.0 1100.0,640.5 1180.0,651.5 1280.0,667.0 1380.0,683.0 1480.0,696.7 1600.0,709.0 1783.0,724.4 1981.9,757.3 2025.3,775.5 2100.0,806.9 2100.0,831.6 2025.3,800.2 1981.9,782.0 1783.0,750.8 1600.0,736.0 1480.0,725.2 1380.0,712.8 1280.0,694.0 1180.0,678.0 1120.0,668.6 1000.0,658.5 820.0,651.6 700.0,647.0" fill="#a5a500"/><polygon points="700.0,512.0 820.0,527.2 1180.0,572.9 1240.0,580.0 1530.0,616.0 1981.9,642.8 2025.3,650.2 2100.0,662.9 2100.0,676.4 2025.3,663.7 1981.9,656.3 1790.0,672.0 1527.0,638.9 1240.0,601.0 1180.0,592.3 820.0,546.1 700.0,530.7" fill="#a50000"/><polygon points="700.0,200.0 2100.0,200.0 2100.0,477.6 2022.3,473.2 2019.6,473.1 2014.1,472.8 2005.8,472.3 1994.8,471.7 1984.2,470.7 1973.9,469.4 1964.0,467.8 1954.4,465.8 1944.9,464.0 1935.4,462.4 1926.1,460.9 1916.8,459.6 1905.1,458.2 1891.1,456.5 1874.6,454.7 1855.7,452.8 1841.1,451.2 1830.8,450.1 1824.7,449.5 1822.8,449.2 1814.0,448.1 1798.3,446.1 1775.7,443.2 1746.1,439.3 1723.8,436.5 1708.8,434.5 1701.1,433.5 1700.7,433.5 1692.8,432.5 1677.6,430.8 1655.0,428.1 1625.0,424.7 1602.3,422.0 1586.8,420.2 1578.5,419.2 1577.5,419.0 1572.0,418.1 1562.1,416.2 1547.7,413.6 1528.9,410.1 1508.4,406.6 1486.4,403.0 1462.9,399.4 1437.7,395.7 1416.4,392.6 1398.8,390.0 1385.0,388.0 1375.0,386.6 1367.1,385.5 1361.2,384.7 1357.4,384.1 1355.7,383.9 1349.0,383.2 1337.1,381.9 1320.2,380.2 1298.2,378.1 1280.1,376.2 1266.0,374.8 1255.7,373.6 1249.4,372.9 1238.4,371.6 1222.5,369.7 1201.8,367.2 1176.4,364.2 1157.3,361.9 1144.6,360.4 1138.2,359.6 700.0,307.3" fill="#7d4812"/><polygon points="1628.4,344.7 1659.0,384.4 1577.0,363.1" fill="#7fd0c0" fill-opacity="0.22"/><polygon points="1628.4,344.7 1811.0,371.0 1835.5,403.3 1659.0,384.4" fill="#2aa6a6"/><polygon points="1644.8,365.1 1822.4,386.0 1835.5,403.3 1659.0,384.4" fill="#8fb08a" fill-opacity="0.42"/><polygon points="700.0,200.0 2100.0,200.0 2100.0,413.0 2022.3,407.2 2019.6,407.0 2014.1,406.6 2005.8,406.0 1994.8,405.1 1984.2,404.0 1973.9,402.5 1964.0,400.7 1954.4,398.5 1944.9,396.6 1935.4,394.8 1926.1,393.1 1916.8,391.7 1905.1,390.0 1891.1,388.1 1874.6,386.0 1855.7,383.7 1841.1,381.9 1830.8,380.6 1824.7,379.9 1822.8,379.6 1814.0,378.3 1798.3,376.0 1775.7,372.7 1746.1,368.3 1723.8,365.0 1708.8,362.8 1701.1,361.7 1700.7,361.6 1692.8,360.5 1677.6,358.5 1655.0,355.5 1625.0,351.4 1602.3,348.4 1586.8,346.3 1578.5,345.1 1577.5,345.0 1572.0,343.9 1562.1,341.9 1547.7,339.0 1528.9,335.2 1508.4,331.3 1486.4,327.3 1462.9,323.2 1437.7,319.1 1416.4,315.6 1398.8,312.7 1385.0,310.5 1375.0,308.9 1367.1,307.6 1361.2,306.7 1357.4,306.1 1355.7,305.8 1349.0,305.0 1337.1,303.5 1320.2,301.5 1298.2,298.9 1280.1,296.8 1266.0,295.1 1255.7,293.8 1249.4,292.9 1238.4,291.4 1222.5,289.2 1201.8,286.4 1176.4,282.9 1157.3,280.2 1144.6,278.5 1138.2,277.6 700.0,217.4" fill="#2d7f32"/></g>
<clipPath id="c7"><polygon points="1101.2,290.2 1107.5,290.9 1120.2,292.3 1139.1,294.3 1164.4,297.1 1185.7,299.4 1203.1,301.3 1216.4,302.7 1225.9,303.8 1236.9,305.1 1249.4,306.8 1263.6,308.7 1279.3,311.0 1294.7,313.2 1309.7,315.4 1324.3,317.5 1338.6,319.5 1350.4,321.1 1359.9,322.4 1366.9,323.4 1371.5,323.9 1376.2,324.5 1381.2,325.1 1386.5,325.6 1391.9,326.2 1403.8,327.9 1422.2,330.9 1447.1,335.1 1478.6,340.5 1505.5,345.2 1528.0,349.3 1546.1,352.6 1559.6,355.2 1574.3,358.0 1590.0,361.1 1606.8,364.3 1624.7,367.8 1641.1,370.8 1656.1,373.2 1669.7,375.1 1681.8,376.5 1695.7,378.2 1711.4,380.2 1728.9,382.5 1748.2,385.1 1765.4,387.4 1780.4,389.3 1793.2,390.9 1803.9,392.1 1817.1,393.7 1832.9,395.4 1851.1,397.5 1871.8,399.8 1889.7,402.2 1904.7,404.6 1916.8,407.1 1926.1,409.7 1933.1,411.7 1937.8,413.0 1940.2,413.7 1940.4,413.7 1944.0,414.3 1950.9,415.3 1961.4,416.9 1975.2,419.0 1985.6,420.5 1992.5,421.5 1995.9,422.1 1979.3,840.7 1120.9,724.0"/></clipPath><g clip-path="url(#c7)"><polygon points="1101.2,290.2 1107.5,290.9 1120.2,292.3 1139.1,294.3 1164.4,297.1 1185.7,299.4 1203.1,301.3 1216.4,302.7 1225.9,303.8 1236.9,305.1 1249.4,306.8 1263.6,308.7 1279.3,311.0 1294.7,313.2 1309.7,315.4 1324.3,317.5 1338.6,319.5 1350.4,321.1 1359.9,322.4 1366.9,323.4 1371.5,323.9 1376.2,324.5 1381.2,325.1 1386.5,325.6 1391.9,326.2 1403.8,327.9 1422.2,330.9 1447.1,335.1 1478.6,340.5 1505.5,345.2 1528.0,349.3 1546.1,352.6 1559.6,355.2 1574.3,358.0 1590.0,361.1 1606.8,364.3 1624.7,367.8 1641.1,370.8 1656.1,373.2 1669.7,375.1 1681.8,376.5 1695.7,378.2 1711.4,380.2 1728.9,382.5 1748.2,385.1 1765.4,387.4 1780.4,389.3 1793.2,390.9 1803.9,392.1 1817.1,393.7 1832.9,395.4 1851.1,397.5 1871.8,399.8 1889.7,402.2 1904.7,404.6 1916.8,407.1 1926.1,409.7 1933.1,411.7 1937.8,413.0 1940.2,413.7 1940.4,413.7 1944.0,414.3 1950.9,415.3 1961.4,416.9 1975.2,419.0 1985.6,420.5 1992.5,421.5 1995.9,422.1 1979.3,840.7 1120.9,724.0" fill="#32a56e"/><polygon points="700.0,200.0 2100.0,200.0 2100.0,769.2 1998.9,750.0 1954.3,741.6 1911.8,723.6 1672.5,691.7 1101.6,621.2 700.0,571.6" fill="#a56363"/><polygon points="700.0,200.0 2100.0,200.0 2100.0,686.1 1998.9,666.9 1954.3,658.5 1911.8,637.6 1672.5,607.8 1511.3,593.6 1298.7,564.7 1101.6,544.4 700.0,502.8" fill="#3068a4"/><polygon points="700.0,200.0 2100.0,200.0 2100.0,628.1 1998.9,608.9 1954.3,600.4 1911.8,565.8 1709.3,554.1 1617.2,548.5 1433.1,532.6 1101.6,500.6 700.0,461.7" fill="#9c6e9c"/><polygon points="700.0,618.2 820.0,632.5 1180.0,675.4 1380.0,700.2 1480.0,713.5 1700.0,739.0 1783.0,748.0 1954.3,751.3 1998.9,758.9 2100.0,776.1 2100.0,776.1 1998.9,758.9 1954.3,751.3 1783.0,764.0 1700.0,756.0 1480.0,728.0 1380.0,715.0 1180.0,690.2 820.0,647.5 700.0,633.3" fill="#a5a500"/><polygon points="700.0,612.3 820.0,617.0 1000.0,624.0 1100.0,631.5 1180.0,642.5 1280.0,658.0 1380.0,674.0 1480.0,687.7 1600.0,700.0 1783.0,715.4 1954.3,743.0 1998.9,761.7 2100.0,804.2 2100.0,829.1 1998.9,786.7 1954.3,767.9 1783.0,741.8 1600.0,727.0 1480.0,716.2 1380.0,703.8 1280.0,685.0 1180.0,669.0 1120.0,659.6 1000.0,649.5 820.0,642.6 700.0,638.0" fill="#a5a500"/><polygon points="700.0,507.0 820.0,522.2 1180.0,567.9 1240.0,575.0 1530.0,611.0 1954.3,639.3 1998.9,646.9 2100.0,664.1 2100.0,677.7 1998.9,660.5 1954.3,652.9 1790.0,667.0 1527.0,633.9 1240.0,596.0 1180.0,587.3 820.0,541.1 700.0,525.7" fill="#a50000"/><polygon points="700.0,200.0 2100.0,200.0 2100.0,503.9 1995.9,489.5 1992.5,489.0 1985.6,488.0 1975.2,486.6 1961.4,484.7 1950.9,483.2 1944.0,482.2 1940.4,481.7 1940.2,481.7 1937.8,481.0 1933.1,479.8 1926.1,477.9 1916.8,475.4 1904.7,473.0 1889.7,470.7 1871.8,468.5 1851.1,466.4 1832.9,464.6 1817.1,463.0 1803.9,461.6 1793.2,460.5 1780.4,459.0 1765.4,457.3 1748.2,455.2 1728.9,452.8 1711.4,450.7 1695.7,448.8 1681.8,447.3 1669.7,446.0 1656.1,444.3 1641.1,442.0 1624.7,439.2 1606.8,435.9 1590.0,432.8 1574.3,429.9 1559.6,427.3 1546.1,424.8 1528.0,421.7 1505.5,417.9 1478.6,413.5 1447.1,408.4 1422.2,404.5 1403.8,401.7 1391.9,400.0 1386.5,399.6 1381.2,399.1 1376.2,398.6 1371.5,398.0 1366.9,397.5 1359.9,396.7 1350.4,395.5 1338.6,393.9 1324.3,392.1 1309.7,390.1 1294.7,388.2 1279.3,386.1 1263.6,384.0 1249.4,382.2 1236.9,380.6 1225.9,379.4 1216.4,378.5 1203.1,377.2 1185.7,375.5 1164.4,373.4 1139.1,370.9 1120.2,369.1 1107.5,367.8 1101.2,367.2 700.0,328.0" fill="#7d4812"/><polygon points="1502.2,349.4 1523.4,385.4 1441.4,364.1" fill="#7fd0c0" fill-opacity="0.22"/><polygon points="1502.2,349.4 1739.4,385.2 1771.4,425.9 1523.4,385.4" fill="#2aa6a6"/><polygon points="1513.5,367.8 1754.2,404.0 1771.4,425.9 1523.4,385.4" fill="#8fb08a" fill-opacity="0.42"/><polygon points="700.0,200.0 2100.0,200.0 2100.0,444.6 1995.9,429.1 1992.5,428.5 1985.6,427.5 1975.2,426.0 1961.4,423.9 1950.9,422.3 1944.0,421.3 1940.4,420.7 1940.2,420.7 1937.8,420.0 1933.1,418.7 1926.1,416.7 1916.8,414.1 1904.7,411.6 1889.7,409.2 1871.8,406.8 1851.1,404.5 1832.9,402.4 1817.1,400.7 1803.9,399.1 1793.2,397.9 1780.4,396.3 1765.4,394.4 1748.2,392.1 1728.9,389.5 1711.4,387.2 1695.7,385.2 1681.8,383.5 1669.7,382.1 1656.1,380.2 1641.1,377.8 1624.7,374.8 1606.8,371.3 1590.0,368.1 1574.3,365.0 1559.6,362.2 1546.1,359.6 1528.0,356.3 1505.5,352.2 1478.6,347.5 1447.1,342.1 1422.2,337.9 1403.8,334.9 1391.9,333.2 1386.5,332.6 1381.2,332.1 1376.2,331.5 1371.5,330.9 1366.9,330.4 1359.9,329.4 1350.4,328.1 1338.6,326.5 1324.3,324.5 1309.7,322.4 1294.7,320.2 1279.3,318.0 1263.6,315.7 1249.4,313.8 1236.9,312.1 1225.9,310.8 1216.4,309.7 1203.1,308.3 1185.7,306.4 1164.4,304.1 1139.1,301.3 1120.2,299.3 1107.5,297.9 1101.2,297.2 700.0,253.7" fill="#2d7f32"/></g>
<clipPath id="c6"><polygon points="1064.0,309.8 1067.5,310.3 1074.5,311.2 1085.0,312.6 1099.0,314.4 1113.1,316.2 1127.2,317.8 1141.4,319.2 1155.7,320.6 1170.4,322.0 1185.4,323.6 1200.7,325.2 1216.4,326.9 1232.1,328.7 1247.9,330.7 1263.6,332.9 1279.3,335.3 1294.7,337.7 1309.7,340.1 1324.3,342.6 1338.6,345.2 1349.7,347.2 1357.5,348.6 1362.2,349.4 1363.6,349.7 1366.8,350.3 1371.8,351.1 1378.6,352.2 1387.2,353.6 1399.9,355.8 1416.7,358.6 1437.7,362.2 1462.9,366.5 1486.7,370.6 1509.2,374.6 1530.4,378.5 1550.2,382.2 1569.6,385.7 1588.4,389.0 1606.8,392.0 1624.7,394.8 1641.1,397.3 1656.1,399.6 1669.7,401.7 1681.8,403.5 1695.7,405.6 1711.4,408.2 1728.9,411.0 1748.2,414.2 1765.4,417.1 1780.4,419.6 1793.2,421.7 1803.9,423.5 1817.1,425.5 1832.9,427.7 1851.1,430.1 1871.8,432.7 1889.7,435.0 1904.7,436.8 1916.8,438.3 1926.1,439.4 1934.8,440.9 1943.0,442.7 1950.6,444.8 1957.7,447.3 1963.0,449.1 1966.5,450.4 1968.3,451.0 1952.0,869.8 1083.7,743.6"/></clipPath><g clip-path="url(#c6)"><polygon points="1064.0,309.8 1067.5,310.3 1074.5,311.2 1085.0,312.6 1099.0,314.4 1113.1,316.2 1127.2,317.8 1141.4,319.2 1155.7,320.6 1170.4,322.0 1185.4,323.6 1200.7,325.2 1216.4,326.9 1232.1,328.7 1247.9,330.7 1263.6,332.9 1279.3,335.3 1294.7,337.7 1309.7,340.1 1324.3,342.6 1338.6,345.2 1349.7,347.2 1357.5,348.6 1362.2,349.4 1363.6,349.7 1366.8,350.3 1371.8,351.1 1378.6,352.2 1387.2,353.6 1399.9,355.8 1416.7,358.6 1437.7,362.2 1462.9,366.5 1486.7,370.6 1509.2,374.6 1530.4,378.5 1550.2,382.2 1569.6,385.7 1588.4,389.0 1606.8,392.0 1624.7,394.8 1641.1,397.3 1656.1,399.6 1669.7,401.7 1681.8,403.5 1695.7,405.6 1711.4,408.2 1728.9,411.0 1748.2,414.2 1765.4,417.1 1780.4,419.6 1793.2,421.7 1803.9,423.5 1817.1,425.5 1832.9,427.7 1851.1,430.1 1871.8,432.7 1889.7,435.0 1904.7,436.8 1916.8,438.3 1926.1,439.4 1934.8,440.9 1943.0,442.7 1950.6,444.8 1957.7,447.3 1963.0,449.1 1966.5,450.4 1968.3,451.0 1952.0,869.8 1083.7,743.6" fill="#32a56e"/><polygon points="700.0,200.0 2100.0,200.0 2100.0,794.1 1971.3,769.7 1925.4,760.9 1883.8,743.4 1641.7,708.9 1064.4,632.3 700.0,583.9" fill="#a56363"/><polygon points="700.0,200.0 2100.0,200.0 2100.0,711.0 1971.3,686.5 1925.4,677.8 1883.8,657.4 1641.7,625.0 1478.7,609.1 1263.7,578.0 1064.4,555.5 700.0,514.3" fill="#3068a4"/><polygon points="700.0,200.0 2100.0,200.0 2100.0,650.1 1971.3,625.7 1925.4,617.0 1883.8,583.1 1678.9,569.3 1585.8,562.7 1399.6,544.8 1064.4,509.2 700.0,470.5" fill="#9c6e9c"/><polygon points="700.0,614.2 820.0,628.5 1180.0,671.4 1380.0,696.2 1480.0,709.5 1700.0,735.0 1783.0,744.0 1925.4,736.7 1971.3,744.5 2100.0,766.4 2100.0,766.4 1971.3,744.5 1925.4,736.7 1783.0,760.0 1700.0,752.0 1480.0,724.0 1380.0,711.0 1180.0,686.2 820.0,643.5 700.0,629.3" fill="#a5a500"/><polygon points="700.0,603.3 820.0,608.0 1000.0,615.0 1100.0,622.5 1180.0,633.5 1280.0,649.0 1380.0,665.0 1480.0,678.7 1600.0,691.0 1783.0,706.4 1925.4,728.0 1971.3,747.3 2100.0,801.4 2100.0,826.5 1971.3,772.4 1925.4,753.1 1783.0,732.8 1600.0,718.0 1480.0,707.2 1380.0,694.8 1280.0,676.0 1180.0,660.0 1120.0,650.6 1000.0,640.5 820.0,633.6 700.0,629.0" fill="#a5a500"/><polygon points="700.0,502.0 820.0,517.2 1180.0,562.9 1240.0,570.0 1530.0,606.0 1925.4,635.6 1971.3,643.4 2100.0,665.3 2100.0,679.0 1971.3,657.1 1925.4,649.3 1790.0,662.0 1527.0,628.9 1240.0,591.0 1180.0,582.3 820.0,536.1 700.0,520.7" fill="#a50000"/><polygon points="700.0,200.0 2100.0,200.0 2100.0,551.2 1968.3,506.5 1966.5,505.9 1963.0,504.7 1957.7,502.9 1950.6,500.5 1943.0,498.5 1934.8,496.8 1926.1,495.4 1916.8,494.4 1904.7,493.0 1889.7,491.3 1871.8,489.3 1851.1,486.9 1832.9,484.7 1817.1,482.6 1803.9,480.8 1793.2,479.1 1780.4,477.1 1765.4,474.7 1748.2,472.1 1728.9,469.1 1711.4,466.4 1695.7,464.0 1681.8,462.0 1669.7,460.3 1656.1,458.4 1641.1,456.3 1624.7,453.9 1606.8,451.3 1588.4,448.5 1569.6,445.4 1550.2,442.1 1530.4,438.6 1509.2,435.0 1486.7,431.2 1462.9,427.3 1437.7,423.3 1416.7,419.9 1399.9,417.2 1387.2,415.3 1378.6,413.9 1371.8,412.9 1366.8,412.1 1363.6,411.6 1362.2,411.3 1357.5,410.5 1349.7,409.2 1338.6,407.3 1324.3,404.9 1309.7,402.5 1294.7,400.2 1279.3,398.0 1263.6,395.8 1247.9,393.8 1232.1,392.0 1216.4,390.3 1200.7,388.7 1185.4,387.3 1170.4,385.9 1155.7,384.6 1141.4,383.4 1127.2,382.1 1113.1,380.6 1099.0,379.1 1085.0,377.4 1074.5,376.1 1067.5,375.3 1064.0,374.8 700.0,330.8" fill="#7d4812"/><polygon points="1389.2,356.9 1408.5,392.0 1326.5,370.7" fill="#7fd0c0" fill-opacity="0.22"/><polygon points="1389.2,356.9 1630.1,396.5 1669.7,440.0 1408.5,392.0" fill="#2aa6a6"/><polygon points="1399.4,374.8 1648.3,416.5 1669.7,440.0 1408.5,392.0" fill="#8fb08a" fill-opacity="0.42"/><polygon points="700.0,200.0 2100.0,200.0 2100.0,504.0 1968.3,458.0 1966.5,457.4 1963.0,456.1 1957.7,454.3 1950.6,451.8 1943.0,449.7 1934.8,447.9 1926.1,446.4 1916.8,445.3 1904.7,443.8 1889.7,442.0 1871.8,439.7 1851.1,437.1 1832.9,434.7 1817.1,432.5 1803.9,430.5 1793.2,428.7 1780.4,426.6 1765.4,424.1 1748.2,421.2 1728.9,418.0 1711.4,415.2 1695.7,412.6 1681.8,410.5 1669.7,408.7 1656.1,406.6 1641.1,404.3 1624.7,401.8 1606.8,399.0 1588.4,396.0 1569.6,392.7 1550.2,389.2 1530.4,385.5 1509.2,381.6 1486.7,377.6 1462.9,373.5 1437.7,369.2 1416.7,365.6 1399.9,362.8 1387.2,360.6 1378.6,359.2 1371.8,358.1 1366.8,357.3 1363.6,356.7 1362.2,356.4 1357.5,355.6 1349.7,354.2 1338.6,352.2 1324.3,349.6 1309.7,347.1 1294.7,344.7 1279.3,342.3 1263.6,339.9 1247.9,337.7 1232.1,335.7 1216.4,333.9 1200.7,332.2 1185.4,330.6 1170.4,329.0 1155.7,327.6 1141.4,326.2 1127.2,324.8 1113.1,323.2 1099.0,321.4 1085.0,319.6 1074.5,318.2 1067.5,317.3 1064.0,316.8 700.0,269.0" fill="#2d7f32"/></g>
<clipPath id="c5"><polygon points="1025.8,330.0 1031.7,330.8 1043.5,332.5 1061.1,335.1 1084.7,338.5 1105.9,341.5 1124.8,344.1 1141.4,346.2 1155.7,347.9 1170.4,349.6 1185.4,351.4 1200.7,353.3 1216.4,355.3 1232.1,357.4 1247.9,359.8 1263.6,362.5 1279.3,365.3 1294.7,367.9 1309.7,370.2 1324.3,372.2 1338.6,374.0 1351.8,375.6 1363.9,377.1 1375.0,378.4 1385.0,379.7 1400.4,382.2 1421.1,385.9 1447.1,391.0 1478.6,397.3 1505.5,402.7 1528.0,407.3 1546.1,410.9 1559.6,413.6 1574.3,416.4 1590.0,419.2 1606.8,422.1 1624.7,425.0 1641.1,427.6 1656.1,430.1 1669.7,432.3 1681.8,434.2 1695.7,436.5 1711.4,439.1 1728.9,442.1 1748.2,445.3 1765.4,448.2 1780.4,450.7 1793.2,452.8 1803.9,454.6 1812.4,456.0 1818.7,457.0 1822.8,457.7 1824.7,458.1 1829.2,458.6 1836.4,459.3 1846.3,460.2 1858.9,461.3 1872.2,463.1 1886.2,465.6 1900.8,468.8 1916.2,472.7 1927.8,475.7 1935.5,477.7 1939.4,478.6 1924.0,901.2 1045.5,763.7"/></clipPath><g clip-path="url(#c5)"><polygon points="1025.8,330.0 1031.7,330.8 1043.5,332.5 1061.1,335.1 1084.7,338.5 1105.9,341.5 1124.8,344.1 1141.4,346.2 1155.7,347.9 1170.4,349.6 1185.4,351.4 1200.7,353.3 1216.4,355.3 1232.1,357.4 1247.9,359.8 1263.6,362.5 1279.3,365.3 1294.7,367.9 1309.7,370.2 1324.3,372.2 1338.6,374.0 1351.8,375.6 1363.9,377.1 1375.0,378.4 1385.0,379.7 1400.4,382.2 1421.1,385.9 1447.1,391.0 1478.6,397.3 1505.5,402.7 1528.0,407.3 1546.1,410.9 1559.6,413.6 1574.3,416.4 1590.0,419.2 1606.8,422.1 1624.7,425.0 1641.1,427.6 1656.1,430.1 1669.7,432.3 1681.8,434.2 1695.7,436.5 1711.4,439.1 1728.9,442.1 1748.2,445.3 1765.4,448.2 1780.4,450.7 1793.2,452.8 1803.9,454.6 1812.4,456.0 1818.7,457.0 1822.8,457.7 1824.7,458.1 1829.2,458.6 1836.4,459.3 1846.3,460.2 1858.9,461.3 1872.2,463.1 1886.2,465.6 1900.8,468.8 1916.2,472.7 1927.8,475.7 1935.5,477.7 1939.4,478.6 1924.0,901.2 1045.5,763.7" fill="#32a56e"/><polygon points="700.0,200.0 2100.0,200.0 2100.0,819.9 1942.4,789.9 1896.4,781.2 1855.0,765.4 1610.1,727.9 1026.2,643.9 700.0,597.0" fill="#a56363"/><polygon points="700.0,200.0 2100.0,200.0 2100.0,736.7 1942.4,706.7 1896.4,698.0 1855.0,679.4 1610.1,644.0 1445.3,626.0 1227.7,592.1 1026.2,567.1 700.0,526.6" fill="#3068a4"/><polygon points="700.0,200.0 2100.0,200.0 2100.0,673.0 1942.4,643.1 1896.4,634.3 1855.0,602.6 1647.8,586.2 1553.6,578.4 1365.2,558.2 1026.2,518.3 700.0,479.9" fill="#9c6e9c"/><polygon points="700.0,610.2 820.0,624.5 1180.0,667.4 1380.0,692.2 1480.0,705.5 1700.0,731.0 1783.0,740.0 1896.4,721.8 1942.4,729.6 2100.0,756.4 2100.0,756.4 1942.4,729.6 1896.4,721.8 1783.0,756.0 1700.0,748.0 1480.0,720.0 1380.0,707.0 1180.0,682.2 820.0,639.5 700.0,625.3" fill="#a5a500"/><polygon points="700.0,594.3 820.0,599.0 1000.0,606.0 1100.0,613.5 1180.0,624.5 1280.0,640.0 1380.0,656.0 1480.0,669.7 1600.0,682.0 1783.0,697.4 1896.4,713.0 1942.4,732.3 2100.0,798.5 2100.0,823.8 1942.4,757.6 1896.4,738.3 1783.0,723.8 1600.0,709.0 1480.0,698.2 1380.0,685.8 1280.0,667.0 1180.0,651.0 1120.0,641.6 1000.0,631.5 820.0,624.6 700.0,620.0" fill="#a5a500"/><polygon points="700.0,497.0 820.0,512.2 1180.0,557.9 1240.0,565.0 1530.0,601.0 1896.4,632.0 1942.4,639.8 2100.0,666.6 2100.0,680.4 1942.4,653.6 1896.4,645.8 1790.0,657.0 1527.0,623.9 1240.0,586.0 1180.0,577.3 820.0,531.1 700.0,515.7" fill="#a50000"/><polygon points="700.0,200.0 2100.0,200.0 2100.0,564.1 1939.4,524.3 1935.5,523.4 1927.8,521.5 1916.2,518.6 1900.8,514.8 1886.2,511.7 1872.2,509.3 1858.9,507.6 1846.3,506.6 1836.4,505.8 1829.2,505.2 1824.7,504.7 1822.8,504.3 1818.7,503.7 1812.4,502.7 1803.9,501.3 1793.2,499.7 1780.4,497.7 1765.4,495.3 1748.2,492.5 1728.9,489.4 1711.4,486.7 1695.7,484.2 1681.8,482.0 1669.7,480.1 1656.1,478.0 1641.1,475.7 1624.7,473.2 1606.8,470.4 1590.0,467.7 1574.3,465.0 1559.6,462.3 1546.1,459.7 1528.0,456.2 1505.5,451.9 1478.6,446.7 1447.1,440.6 1421.1,435.8 1400.4,432.2 1385.0,429.8 1375.0,428.6 1363.9,427.4 1351.8,426.0 1338.6,424.5 1324.3,422.8 1309.7,420.9 1294.7,418.7 1279.3,416.3 1263.6,413.6 1247.9,411.1 1232.1,408.8 1216.4,406.7 1200.7,404.9 1185.4,403.2 1170.4,401.5 1155.7,399.8 1141.4,398.3 1124.8,396.3 1105.9,393.9 1084.7,391.1 1061.1,387.8 1043.5,385.4 1031.7,383.8 1025.8,383.0 700.0,338.0" fill="#7d4812"/><polygon points="1287.9,364.2 1308.4,406.7 1226.4,385.4" fill="#7fd0c0" fill-opacity="0.22"/><polygon points="1287.9,364.2 1470.0,393.7 1528.4,444.7 1308.4,406.7" fill="#2aa6a6"/><polygon points="1298.8,386.1 1496.6,417.1 1528.4,444.7 1308.4,406.7" fill="#8fb08a" fill-opacity="0.42"/><polygon points="700.0,200.0 2100.0,200.0 2100.0,526.7 1939.4,485.6 1935.5,484.7 1927.8,482.7 1916.2,479.7 1900.8,475.8 1886.2,472.6 1872.2,470.1 1858.9,468.3 1846.3,467.2 1836.4,466.3 1829.2,465.6 1824.7,465.1 1822.8,464.7 1818.7,464.0 1812.4,463.0 1803.9,461.6 1793.2,459.8 1780.4,457.7 1765.4,455.2 1748.2,452.3 1728.9,449.1 1711.4,446.1 1695.7,443.5 1681.8,441.2 1669.7,439.3 1656.1,437.1 1641.1,434.6 1624.7,432.0 1606.8,429.1 1590.0,426.2 1574.3,423.4 1559.6,420.6 1546.1,417.9 1528.0,414.3 1505.5,409.7 1478.6,404.3 1447.1,398.0 1421.1,392.9 1400.4,389.2 1385.0,386.7 1375.0,385.4 1363.9,384.1 1351.8,382.6 1338.6,381.0 1324.3,379.2 1309.7,377.2 1294.7,374.9 1279.3,372.3 1263.6,369.5 1247.9,366.8 1232.1,364.4 1216.4,362.3 1200.7,360.3 1185.4,358.4 1170.4,356.6 1155.7,354.9 1141.4,353.2 1124.8,351.1 1105.9,348.5 1084.7,345.5 1061.1,342.1 1043.5,339.5 1031.7,337.8 1025.8,337.0 700.0,289.4" fill="#2d7f32"/></g>
<clipPath id="c4"><polygon points="987.3,352.6 988.1,352.7 989.7,352.9 992.1,353.1 995.2,353.5 1005.1,354.8 1021.7,357.2 1045.0,360.5 1075.0,364.8 1097.5,368.1 1112.6,370.2 1120.2,371.3 1120.4,371.4 1127.9,372.6 1142.9,374.9 1165.4,378.5 1195.2,383.2 1219.2,387.0 1237.3,389.9 1249.4,391.9 1255.7,393.0 1266.4,394.4 1281.4,396.3 1300.7,398.6 1324.4,401.3 1344.7,403.5 1361.6,405.4 1375.0,406.8 1385.0,407.8 1400.4,410.4 1421.1,414.6 1447.1,420.5 1478.6,428.0 1505.5,434.2 1528.0,439.3 1546.1,443.2 1559.6,445.9 1574.3,448.7 1590.0,451.8 1606.8,455.0 1624.7,458.5 1641.1,461.6 1656.1,464.5 1669.7,467.1 1681.8,469.4 1694.1,471.8 1706.7,474.2 1719.5,476.7 1732.5,479.3 1745.4,481.7 1758.2,483.9 1770.9,485.9 1783.5,487.7 1794.0,489.3 1802.5,490.5 1808.9,491.4 1813.4,492.0 1822.3,493.4 1835.9,495.7 1853.9,498.9 1876.5,502.8 1893.5,505.8 1904.8,507.8 1910.4,508.8 1895.0,932.6 1007.0,786.3"/></clipPath><g clip-path="url(#c4)"><polygon points="987.3,352.6 988.1,352.7 989.7,352.9 992.1,353.1 995.2,353.5 1005.1,354.8 1021.7,357.2 1045.0,360.5 1075.0,364.8 1097.5,368.1 1112.6,370.2 1120.2,371.3 1120.4,371.4 1127.9,372.6 1142.9,374.9 1165.4,378.5 1195.2,383.2 1219.2,387.0 1237.3,389.9 1249.4,391.9 1255.7,393.0 1266.4,394.4 1281.4,396.3 1300.7,398.6 1324.4,401.3 1344.7,403.5 1361.6,405.4 1375.0,406.8 1385.0,407.8 1400.4,410.4 1421.1,414.6 1447.1,420.5 1478.6,428.0 1505.5,434.2 1528.0,439.3 1546.1,443.2 1559.6,445.9 1574.3,448.7 1590.0,451.8 1606.8,455.0 1624.7,458.5 1641.1,461.6 1656.1,464.5 1669.7,467.1 1681.8,469.4 1694.1,471.8 1706.7,474.2 1719.5,476.7 1732.5,479.3 1745.4,481.7 1758.2,483.9 1770.9,485.9 1783.5,487.7 1794.0,489.3 1802.5,490.5 1808.9,491.4 1813.4,492.0 1822.3,493.4 1835.9,495.7 1853.9,498.9 1876.5,502.8 1893.5,505.8 1904.8,507.8 1910.4,508.8 1895.0,932.6 1007.0,786.3" fill="#32a56e"/><polygon points="700.0,200.0 2100.0,200.0 2100.0,846.1 1913.4,810.6 1866.3,801.7 1825.2,787.6 1577.8,747.7 987.7,658.0 700.0,614.3" fill="#a56363"/><polygon points="700.0,200.0 2100.0,200.0 2100.0,762.8 1913.4,727.4 1866.3,718.4 1825.2,701.6 1577.8,663.8 1411.2,644.2 1191.4,608.2 987.7,581.2 700.0,543.1" fill="#3068a4"/><polygon points="700.0,200.0 2100.0,200.0 2100.0,696.3 1913.4,660.8 1866.3,651.9 1825.2,622.3 1615.8,603.9 1520.7,595.2 1330.3,573.1 987.7,529.9 700.0,493.7" fill="#9c6e9c"/><polygon points="700.0,606.2 820.0,620.5 1180.0,663.4 1380.0,688.2 1480.0,701.5 1700.0,727.0 1783.0,736.0 1866.3,723.5 1913.4,731.5 2100.0,763.2 2100.0,783.1 1913.4,751.4 1866.3,743.4 1783.0,752.0 1700.0,744.0 1480.0,716.0 1380.0,703.0 1180.0,678.2 820.0,635.5 700.0,621.3" fill="#a5a500"/><polygon points="700.0,585.3 820.0,590.0 1000.0,597.0 1100.0,604.5 1180.0,615.5 1280.0,631.0 1380.0,647.0 1480.0,660.7 1600.0,673.0 1783.0,688.4 1866.3,697.3 1913.4,717.1 2100.0,795.5 2100.0,821.1 1913.4,742.7 1866.3,722.9 1783.0,714.8 1600.0,700.0 1480.0,689.2 1380.0,676.8 1280.0,658.0 1180.0,642.0 1120.0,632.6 1000.0,622.5 820.0,615.6 700.0,611.0" fill="#a5a500"/><polygon points="700.0,492.0 820.0,507.2 1180.0,552.9 1240.0,560.0 1530.0,596.0 1866.3,628.1 1913.4,636.2 2100.0,667.9 2100.0,681.8 1913.4,650.1 1866.3,642.1 1790.0,652.0 1527.0,618.9 1240.0,581.0 1180.0,572.3 820.0,526.1 700.0,510.7" fill="#a50000"/><polygon points="700.0,200.0 2100.0,200.0 2100.0,574.5 1910.4,542.6 1904.8,541.7 1893.5,539.8 1876.5,536.9 1853.9,533.1 1835.9,530.1 1822.3,527.9 1813.4,526.6 1808.9,526.0 1802.5,525.1 1794.0,524.0 1783.5,522.5 1770.9,520.8 1758.2,518.9 1745.4,516.8 1732.5,514.5 1719.5,512.0 1706.7,509.6 1694.1,507.3 1681.8,505.0 1669.7,502.8 1656.1,500.3 1641.1,497.5 1624.7,494.5 1606.8,491.2 1590.0,488.1 1574.3,485.2 1559.6,482.4 1546.1,479.8 1528.0,476.1 1505.5,471.2 1478.6,465.1 1447.1,457.9 1421.1,452.2 1400.4,448.2 1385.0,445.7 1375.0,444.8 1361.6,443.5 1344.7,441.7 1324.4,439.6 1300.7,437.1 1281.4,435.0 1266.4,433.2 1255.7,431.9 1249.4,430.8 1237.3,429.0 1219.2,426.2 1195.2,422.6 1165.4,418.1 1142.9,414.7 1127.9,412.5 1120.4,411.3 1120.2,411.3 1112.6,410.3 1097.5,408.2 1075.0,405.1 1045.0,401.0 1021.7,397.9 1005.1,395.7 995.2,394.4 992.1,394.1 989.7,393.8 988.1,393.7 987.3,393.6 700.0,363.9" fill="#7d4812"/><polygon points="1206.2,383.8 1224.4,426.8 1142.4,405.5" fill="#7fd0c0" fill-opacity="0.22"/><polygon points="1206.2,383.8 1291.7,395.6 1359.7,446.7 1224.4,426.8" fill="#2aa6a6"/><polygon points="1215.8,406.0 1322.7,419.0 1359.7,446.7 1224.4,426.8" fill="#8fb08a" fill-opacity="0.42"/><polygon points="700.0,200.0 2100.0,200.0 2100.0,549.2 1910.4,515.8 1904.8,514.8 1893.5,512.8 1876.5,509.8 1853.9,505.9 1835.9,502.7 1822.3,500.4 1813.4,499.0 1808.9,498.4 1802.5,497.5 1794.0,496.3 1783.5,494.7 1770.9,492.9 1758.2,490.9 1745.4,488.7 1732.5,486.3 1719.5,483.7 1706.7,481.2 1694.1,478.8 1681.8,476.4 1669.7,474.1 1656.1,471.5 1641.1,468.6 1624.7,465.5 1606.8,462.0 1590.0,458.8 1574.3,455.7 1559.6,452.9 1546.1,450.2 1528.0,446.3 1505.5,441.2 1478.6,435.0 1447.1,427.5 1421.1,421.6 1400.4,417.4 1385.0,414.8 1375.0,413.8 1361.6,412.4 1344.7,410.5 1324.4,408.3 1300.7,405.6 1281.4,403.3 1266.4,401.4 1255.7,400.0 1249.4,398.9 1237.3,396.9 1219.2,394.0 1195.2,390.2 1165.4,385.5 1142.9,381.9 1127.9,379.6 1120.4,378.4 1120.2,378.3 1112.6,377.2 1097.5,375.1 1075.0,371.8 1045.0,367.5 1021.7,364.2 1005.1,361.8 995.2,360.5 992.1,360.1 989.7,359.9 988.1,359.7 987.3,359.6 700.0,327.6" fill="#2d7f32"/></g>
<clipPath id="c3"><polygon points="947.1,376.2 950.4,376.7 957.0,377.7 966.9,379.1 980.2,381.0 997.6,383.5 1019.2,386.6 1045.0,390.4 1075.0,394.6 1097.5,397.9 1112.6,400.0 1120.2,401.1 1120.4,401.2 1127.9,402.4 1142.9,404.8 1165.4,408.3 1195.2,413.1 1219.2,416.9 1237.3,419.7 1249.4,421.7 1255.7,422.6 1266.4,424.1 1281.4,426.1 1300.7,428.7 1324.4,431.7 1344.7,434.4 1361.6,436.6 1375.0,438.5 1385.0,440.0 1400.4,442.9 1421.1,447.4 1447.1,453.4 1478.6,460.8 1505.5,467.2 1528.0,472.5 1546.1,476.7 1559.6,479.8 1574.3,483.1 1590.0,486.7 1606.8,490.5 1624.7,494.6 1641.1,498.3 1656.1,501.6 1669.7,504.5 1681.8,507.0 1691.8,509.1 1699.6,510.6 1705.4,511.8 1708.9,512.4 1715.6,513.1 1725.2,513.9 1737.9,514.7 1753.6,515.6 1768.1,516.7 1781.3,517.8 1793.2,519.2 1803.9,520.6 1815.7,522.6 1828.6,525.2 1842.6,528.4 1857.7,532.1 1869.0,534.9 1876.5,536.8 1880.3,537.7 1865.3,965.6 966.8,810.0"/></clipPath><g clip-path="url(#c3)"><polygon points="947.1,376.2 950.4,376.7 957.0,377.7 966.9,379.1 980.2,381.0 997.6,383.5 1019.2,386.6 1045.0,390.4 1075.0,394.6 1097.5,397.9 1112.6,400.0 1120.2,401.1 1120.4,401.2 1127.9,402.4 1142.9,404.8 1165.4,408.3 1195.2,413.1 1219.2,416.9 1237.3,419.7 1249.4,421.7 1255.7,422.6 1266.4,424.1 1281.4,426.1 1300.7,428.7 1324.4,431.7 1344.7,434.4 1361.6,436.6 1375.0,438.5 1385.0,440.0 1400.4,442.9 1421.1,447.4 1447.1,453.4 1478.6,460.8 1505.5,467.2 1528.0,472.5 1546.1,476.7 1559.6,479.8 1574.3,483.1 1590.0,486.7 1606.8,490.5 1624.7,494.6 1641.1,498.3 1656.1,501.6 1669.7,504.5 1681.8,507.0 1691.8,509.1 1699.6,510.6 1705.4,511.8 1708.9,512.4 1715.6,513.1 1725.2,513.9 1737.9,514.7 1753.6,515.6 1768.1,516.7 1781.3,517.8 1793.2,519.2 1803.9,520.6 1815.7,522.6 1828.6,525.2 1842.6,528.4 1857.7,532.1 1869.0,534.9 1876.5,536.8 1880.3,537.7 1865.3,965.6 966.8,810.0" fill="#32a56e"/><polygon points="700.0,200.0 2100.0,200.0 2100.0,873.2 1883.3,832.0 1834.8,822.8 1794.7,811.4 1544.4,768.9 947.5,673.2 700.0,633.4" fill="#a56363"/><polygon points="700.0,200.0 2100.0,200.0 2100.0,789.8 1883.3,748.7 1834.8,739.5 1794.7,725.4 1544.4,685.0 1375.9,663.7 1153.5,625.5 947.5,596.4 700.0,561.4" fill="#3068a4"/><polygon points="700.0,200.0 2100.0,200.0 2100.0,720.3 1883.3,679.2 1834.8,670.0 1794.7,643.6 1582.9,623.0 1486.6,613.3 1294.1,589.3 947.5,542.6 700.0,509.2" fill="#9c6e9c"/><polygon points="700.0,602.2 820.0,616.5 1180.0,659.4 1380.0,684.2 1480.0,697.5 1700.0,723.0 1783.0,732.0 1834.8,720.2 1883.3,728.5 2100.0,765.3 2100.0,784.8 1883.3,748.0 1834.8,739.7 1783.0,748.0 1700.0,740.0 1480.0,712.0 1380.0,699.0 1180.0,674.2 820.0,631.5 700.0,617.3" fill="#a5a500"/><polygon points="700.0,576.3 820.0,581.0 1000.0,588.0 1100.0,595.5 1180.0,606.5 1280.0,622.0 1380.0,638.0 1480.0,651.7 1600.0,664.0 1783.0,679.4 1834.8,681.1 1883.3,701.4 2100.0,792.4 2100.0,818.2 1883.3,727.2 1834.8,706.8 1783.0,705.8 1600.0,691.0 1480.0,680.2 1380.0,667.8 1280.0,649.0 1180.0,633.0 1120.0,623.6 1000.0,613.5 820.0,606.6 700.0,602.0" fill="#a5a500"/><polygon points="700.0,487.0 820.0,502.2 1180.0,547.9 1240.0,555.0 1530.0,591.0 1834.8,624.1 1883.3,632.4 2100.0,669.2 2100.0,683.3 1883.3,646.5 1834.8,638.2 1790.0,647.0 1527.0,613.9 1240.0,576.0 1180.0,567.3 820.0,521.1 700.0,505.7" fill="#a50000"/><polygon points="700.0,200.0 2100.0,200.0 2100.0,602.3 1880.3,561.7 1876.5,561.0 1869.0,559.6 1857.7,557.5 1842.6,554.7 1828.6,552.4 1815.7,550.6 1803.9,549.4 1800.0,549.1 1793.2,547.8 1781.3,545.9 1768.1,544.0 1753.6,542.2 1737.9,540.5 1725.2,539.0 1715.6,537.7 1708.9,536.6 1705.4,535.8 1704.0,535.5 1699.6,534.9 1691.8,533.7 1681.8,532.1 1669.7,530.2 1656.1,527.9 1641.1,525.4 1624.7,522.5 1606.8,519.3 1590.0,516.3 1574.3,513.5 1559.6,510.8 1546.1,508.4 1528.0,505.1 1505.5,500.9 1500.0,499.9 1478.6,494.6 1447.1,486.8 1421.1,480.6 1400.4,475.9 1400.0,475.9 1385.0,473.3 1375.0,472.1 1361.6,470.5 1344.7,468.7 1324.4,466.5 1300.7,464.0 1281.4,461.9 1266.4,460.3 1255.7,459.0 1249.4,458.2 1237.3,456.6 1230.0,455.6 1219.2,453.9 1195.2,450.1 1165.4,445.3 1142.9,441.8 1127.9,439.4 1120.4,438.2 1120.2,438.1 1120.0,438.1 1112.6,437.0 1097.5,434.9 1075.0,431.6 1045.0,427.4 1019.2,423.6 997.6,420.5 980.2,418.0 966.9,416.1 957.0,414.7 950.4,413.7 947.1,413.2 700.0,377.4" fill="#7d4812"/><polygon points="1095.5,398.1 1120.5,443.5 1038.5,422.2" fill="#7fd0c0" fill-opacity="0.22"/><polygon points="1095.5,398.1 1181.0,412.8 1227.9,464.0 1120.5,443.5" fill="#2aa6a6"/><polygon points="1108.8,421.6 1202.5,436.3 1227.9,464.0 1120.5,443.5" fill="#8fb08a" fill-opacity="0.42"/><polygon points="700.0,200.0 2100.0,200.0 2100.0,599.2 1880.3,544.7 1876.5,543.8 1869.0,541.9 1857.7,539.1 1842.6,535.4 1828.6,532.2 1815.7,529.6 1803.9,527.6 1793.2,526.2 1781.3,524.8 1768.1,523.7 1753.6,522.6 1737.9,521.7 1725.2,520.9 1715.6,520.1 1708.9,519.4 1705.4,518.8 1699.6,517.6 1691.8,516.1 1681.8,514.0 1669.7,511.5 1656.1,508.6 1641.1,505.3 1624.7,501.6 1606.8,497.5 1590.0,493.7 1574.3,490.1 1559.6,486.8 1546.1,483.7 1528.0,479.5 1505.5,474.2 1478.6,467.8 1447.1,460.4 1421.1,454.4 1400.4,449.9 1385.0,447.0 1375.0,445.5 1361.6,443.6 1344.7,441.4 1324.4,438.7 1300.7,435.7 1281.4,433.1 1266.4,431.1 1255.7,429.6 1249.4,428.7 1237.3,426.7 1219.2,423.9 1195.2,420.1 1165.4,415.3 1142.9,411.8 1127.9,409.4 1120.4,408.2 1120.2,408.1 1112.6,407.0 1097.5,404.9 1075.0,401.6 1045.0,397.4 1019.2,393.6 997.6,390.5 980.2,388.0 966.9,386.1 957.0,384.7 950.4,383.7 947.1,383.2 700.0,347.4" fill="#2d7f32"/></g>
<clipPath id="c2"><polygon points="905.1,400.4 911.0,401.3 922.9,403.3 940.7,406.3 964.4,410.2 989.7,414.4 1016.6,418.8 1045.0,423.4 1075.0,428.3 1097.5,432.0 1112.6,434.4 1120.2,435.6 1120.4,435.7 1127.9,437.1 1142.9,439.9 1165.4,444.1 1195.2,449.8 1219.2,454.2 1237.3,457.6 1249.4,459.7 1255.7,460.8 1266.4,462.4 1281.4,464.5 1300.7,467.2 1324.4,470.5 1344.7,473.4 1361.6,475.8 1375.0,477.8 1385.0,479.5 1400.4,482.5 1421.1,487.0 1447.1,492.9 1478.6,500.3 1505.5,506.7 1528.0,512.2 1546.1,516.7 1559.6,520.3 1572.7,523.7 1585.3,526.9 1597.4,529.8 1608.9,532.6 1620.8,535.6 1632.8,538.8 1645.2,542.2 1657.7,545.8 1668.6,548.5 1677.8,550.3 1685.4,551.2 1691.2,551.1 1698.9,551.0 1708.3,550.8 1719.5,550.7 1732.5,550.4 1746.5,550.9 1761.5,551.9 1777.5,553.6 1794.5,556.0 1809.1,558.2 1821.2,560.3 1830.8,562.2 1838.0,564.0 1843.4,565.3 1847.0,566.2 1848.8,566.6 1835.5,998.7 924.8,834.1"/></clipPath><g clip-path="url(#c2)"><polygon points="905.1,400.4 911.0,401.3 922.9,403.3 940.7,406.3 964.4,410.2 989.7,414.4 1016.6,418.8 1045.0,423.4 1075.0,428.3 1097.5,432.0 1112.6,434.4 1120.2,435.6 1120.4,435.7 1127.9,437.1 1142.9,439.9 1165.4,444.1 1195.2,449.8 1219.2,454.2 1237.3,457.6 1249.4,459.7 1255.7,460.8 1266.4,462.4 1281.4,464.5 1300.7,467.2 1324.4,470.5 1344.7,473.4 1361.6,475.8 1375.0,477.8 1385.0,479.5 1400.4,482.5 1421.1,487.0 1447.1,492.9 1478.6,500.3 1505.5,506.7 1528.0,512.2 1546.1,516.7 1559.6,520.3 1572.7,523.7 1585.3,526.9 1597.4,529.8 1608.9,532.6 1620.8,535.6 1632.8,538.8 1645.2,542.2 1657.7,545.8 1668.6,548.5 1677.8,550.3 1685.4,551.2 1691.2,551.1 1698.9,551.0 1708.3,550.8 1719.5,550.7 1732.5,550.4 1746.5,550.9 1761.5,551.9 1777.5,553.6 1794.5,556.0 1809.1,558.2 1821.2,560.3 1830.8,562.2 1838.0,564.0 1843.4,565.3 1847.0,566.2 1848.8,566.6 1835.5,998.7 924.8,834.1" fill="#32a56e"/><polygon points="700.0,200.0 2100.0,200.0 2100.0,900.9 1851.8,853.7 1803.4,844.5 1763.9,835.3 1510.3,790.4 905.5,688.8 700.0,654.3" fill="#a56363"/><polygon points="700.0,200.0 2100.0,200.0 2100.0,817.5 1851.8,770.3 1803.4,761.1 1763.9,749.3 1510.3,706.5 1339.6,683.5 1114.2,643.1 905.5,612.0 700.0,581.4" fill="#3068a4"/><polygon points="700.0,200.0 2100.0,200.0 2100.0,744.9 1851.8,697.8 1803.4,688.6 1763.9,665.0 1549.3,642.3 1451.8,631.7 1256.7,605.8 905.5,555.7 700.0,526.4" fill="#9c6e9c"/><polygon points="700.0,598.2 820.0,612.5 1180.0,655.4 1380.0,680.2 1480.0,693.5 1700.0,719.0 1803.4,717.0 1851.8,725.3 2100.0,767.5 2100.0,786.5 1851.8,744.3 1803.4,736.1 1700.0,736.0 1480.0,708.0 1380.0,695.0 1180.0,670.2 820.0,627.5 700.0,613.3" fill="#a5a500"/><polygon points="700.0,567.3 820.0,572.0 1000.0,579.0 1100.0,586.5 1180.0,597.5 1280.0,613.0 1380.0,629.0 1480.0,642.7 1600.0,655.0 1803.4,664.7 1851.8,685.1 2100.0,789.3 2100.0,815.3 1851.8,711.1 1803.4,690.7 1600.0,682.0 1480.0,671.2 1380.0,658.8 1280.0,640.0 1180.0,624.0 1120.0,614.6 1000.0,604.5 820.0,597.6 700.0,593.0" fill="#a5a500"/><polygon points="700.0,482.0 820.0,497.2 1180.0,542.9 1240.0,550.0 1530.0,586.0 1803.4,620.2 1851.8,628.4 2100.0,670.6 2100.0,684.8 1851.8,642.6 1803.4,634.4 1527.0,608.9 1240.0,571.0 1180.0,562.3 820.0,516.1 700.0,500.7" fill="#a50000"/><polygon points="700.0,200.0 2100.0,200.0 2100.0,661.0 1848.8,581.6 1847.0,581.0 1843.4,579.9 1838.0,578.1 1830.8,575.9 1821.2,573.3 1809.1,570.4 1794.5,567.2 1777.5,563.7 1761.5,560.9 1746.5,558.8 1733.0,557.4 1732.5,557.4 1719.5,557.7 1708.3,557.8 1698.9,558.0 1691.2,558.1 1685.4,558.2 1677.8,557.3 1668.6,555.5 1657.7,552.8 1645.2,549.2 1632.8,545.8 1620.8,542.6 1608.9,539.6 1600.0,537.5 1597.4,537.0 1585.3,534.9 1572.7,532.6 1559.6,530.1 1546.1,527.5 1528.0,524.2 1505.5,520.3 1500.0,519.4 1478.6,514.6 1447.1,507.7 1421.1,502.2 1400.4,498.0 1400.0,497.9 1385.0,498.2 1375.0,498.7 1361.6,499.6 1344.7,500.8 1333.0,501.7 1324.4,499.9 1300.7,494.8 1281.4,490.6 1280.0,490.3 1266.4,488.6 1255.7,487.2 1249.4,486.3 1237.3,484.3 1219.2,481.3 1195.2,477.2 1165.4,472.1 1160.0,471.1 1142.9,464.5 1127.9,458.7 1120.4,455.7 1120.2,455.7 1112.6,452.9 1110.0,452.0 1097.5,451.3 1075.0,450.1 1045.0,448.5 1016.6,446.9 990.0,445.4 989.7,445.4 964.4,441.8 940.7,438.4 922.9,435.9 911.0,434.2 905.1,433.4 700.0,404.2" fill="#7d4812"/><polygon points="968.4,410.3 992.4,455.7 910.4,434.4" fill="#7fd0c0" fill-opacity="0.22"/><polygon points="968.4,410.3 1089.7,430.1 1129.3,475.5 992.4,455.7" fill="#2aa6a6"/><polygon points="981.2,433.8 1107.9,451.0 1129.3,475.5 992.4,455.7" fill="#8fb08a" fill-opacity="0.42"/><polygon points="700.0,200.0 2100.0,200.0 2100.0,635.9 1848.8,573.6 1847.0,573.2 1843.4,572.3 1838.0,571.0 1830.8,569.2 1821.2,567.3 1809.1,565.2 1794.5,563.0 1777.5,560.6 1761.5,558.9 1746.5,557.9 1732.5,557.4 1719.5,557.7 1708.3,557.8 1698.9,558.0 1691.2,558.1 1685.4,558.2 1677.8,557.3 1668.6,555.5 1657.7,552.8 1645.2,549.2 1632.8,545.8 1620.8,542.6 1608.9,539.6 1597.4,536.8 1585.3,533.9 1572.7,530.7 1559.6,527.3 1546.1,523.7 1528.0,519.2 1505.5,513.7 1478.6,507.3 1447.1,499.9 1421.1,494.0 1400.4,489.5 1385.0,486.5 1375.0,484.8 1361.6,482.8 1344.7,480.4 1324.4,477.5 1300.7,474.2 1281.4,471.5 1266.4,469.4 1255.7,467.8 1249.4,466.7 1237.3,464.6 1219.2,461.2 1195.2,456.8 1165.4,451.1 1142.9,446.9 1127.9,444.1 1120.4,442.7 1120.2,442.6 1112.6,441.4 1097.5,439.0 1075.0,435.3 1045.0,430.4 1016.6,425.8 989.7,421.4 964.4,417.2 940.7,413.3 922.9,410.3 911.0,408.3 905.1,407.4 700.0,373.4" fill="#2d7f32"/></g>
<clipPath id="c1"><polygon points="862.9,426.8 871.4,428.2 888.6,430.9 914.3,435.1 948.6,440.7 974.4,444.8 991.6,447.6 1000.4,449.1 1000.7,449.1 1008.4,450.5 1023.4,453.1 1045.7,457.0 1075.4,462.3 1097.8,466.2 1112.7,468.8 1120.2,470.1 1120.4,470.2 1127.9,471.6 1142.9,474.4 1165.4,478.6 1195.2,484.2 1219.2,488.7 1237.3,492.1 1249.4,494.4 1255.7,495.7 1266.4,497.6 1281.4,500.4 1300.7,503.9 1324.4,508.1 1344.7,511.8 1361.6,514.9 1375.0,517.4 1385.0,519.4 1400.4,522.6 1421.1,527.0 1447.1,532.7 1478.6,539.6 1505.5,545.6 1528.0,550.6 1546.1,554.7 1559.6,557.8 1574.3,561.1 1590.0,564.7 1606.8,568.4 1624.7,572.4 1641.1,575.6 1656.1,578.2 1669.7,580.1 1681.8,581.4 1692.6,582.5 1702.0,583.5 1710.1,584.5 1716.8,585.4 1727.5,586.7 1742.2,588.6 1760.8,590.9 1783.5,593.8 1800.4,595.9 1811.7,597.4 1817.4,598.1 1805.0,1033.4 882.5,860.5"/></clipPath><g clip-path="url(#c1)"><polygon points="862.9,426.8 871.4,428.2 888.6,430.9 914.3,435.1 948.6,440.7 974.4,444.8 991.6,447.6 1000.4,449.1 1000.7,449.1 1008.4,450.5 1023.4,453.1 1045.7,457.0 1075.4,462.3 1097.8,466.2 1112.7,468.8 1120.2,470.1 1120.4,470.2 1127.9,471.6 1142.9,474.4 1165.4,478.6 1195.2,484.2 1219.2,488.7 1237.3,492.1 1249.4,494.4 1255.7,495.7 1266.4,497.6 1281.4,500.4 1300.7,503.9 1324.4,508.1 1344.7,511.8 1361.6,514.9 1375.0,517.4 1385.0,519.4 1400.4,522.6 1421.1,527.0 1447.1,532.7 1478.6,539.6 1505.5,545.6 1528.0,550.6 1546.1,554.7 1559.6,557.8 1574.3,561.1 1590.0,564.7 1606.8,568.4 1624.7,572.4 1641.1,575.6 1656.1,578.2 1669.7,580.1 1681.8,581.4 1692.6,582.5 1702.0,583.5 1710.1,584.5 1716.8,585.4 1727.5,586.7 1742.2,588.6 1760.8,590.9 1783.5,593.8 1800.4,595.9 1811.7,597.4 1817.4,598.1 1805.0,1033.4 882.5,860.5" fill="#32a56e"/><polygon points="700.0,200.0 2100.0,200.0 2100.0,928.9 1820.4,875.8 1770.7,866.3 1732.5,860.8 1475.7,813.7 863.2,706.7 700.0,678.2" fill="#a56363"/><polygon points="700.0,200.0 2100.0,200.0 2100.0,845.5 1820.4,792.3 1770.7,782.9 1732.5,774.8 1475.7,729.8 1302.8,705.3 1074.6,662.9 863.2,629.9 700.0,604.4" fill="#3068a4"/><polygon points="700.0,200.0 2100.0,200.0 2100.0,769.8 1820.4,716.7 1770.7,707.3 1732.5,688.0 1515.2,663.4 1416.4,652.0 1218.9,624.3 863.2,571.1 700.0,546.7" fill="#9c6e9c"/><polygon points="700.0,594.2 820.0,608.5 1180.0,651.4 1380.0,676.2 1480.0,689.5 1700.0,715.0 1770.7,713.7 1820.4,722.1 2100.0,769.6 2100.0,788.2 1820.4,740.7 1770.7,732.2 1700.0,732.0 1480.0,704.0 1380.0,691.0 1180.0,666.2 820.0,623.5 700.0,609.3" fill="#a5a500"/><polygon points="700.0,558.3 820.0,563.0 1000.0,570.0 1100.0,577.5 1180.0,588.5 1280.0,604.0 1380.0,620.0 1480.0,633.7 1600.0,646.0 1770.7,647.8 1820.4,668.7 2100.0,786.1 2100.0,812.4 1820.4,694.9 1770.7,674.1 1600.0,673.0 1480.0,662.2 1380.0,649.8 1280.0,631.0 1180.0,615.0 1120.0,605.6 1000.0,595.5 820.0,588.6 700.0,584.0" fill="#a5a500"/><polygon points="700.0,477.0 820.0,492.2 1180.0,537.9 1240.0,545.0 1530.0,581.0 1770.7,616.0 1820.4,624.5 2100.0,672.0 2100.0,686.3 1820.4,638.8 1770.7,630.4 1527.0,603.9 1240.0,566.0 1180.0,557.3 820.0,511.1 700.0,495.7" fill="#a50000"/><polygon points="700.0,200.0 2100.0,200.0 2100.0,640.7 1817.4,605.1 1811.7,604.4 1800.4,602.9 1785.0,601.0 1783.5,600.8 1760.8,597.9 1742.2,595.6 1727.5,593.7 1716.8,592.4 1710.1,591.5 1702.0,590.5 1692.6,589.5 1681.8,588.4 1669.7,587.1 1656.1,585.2 1641.1,582.6 1624.7,579.4 1606.8,575.4 1590.0,571.7 1574.3,568.1 1559.6,564.8 1546.1,561.7 1528.0,557.6 1505.5,552.6 1478.6,546.6 1447.1,539.7 1421.1,534.0 1400.4,529.6 1385.0,526.4 1375.0,524.4 1361.6,521.9 1344.7,518.8 1324.4,515.1 1320.0,514.3 1300.7,512.3 1281.4,510.3 1280.0,510.1 1266.4,507.7 1255.7,505.8 1249.4,504.6 1237.3,502.4 1219.2,499.0 1195.2,494.7 1165.4,489.2 1142.9,485.2 1127.9,482.4 1120.4,481.0 1120.2,481.0 1112.7,479.7 1100.0,477.6 1097.8,477.2 1075.4,473.3 1045.7,468.0 1023.4,464.1 1008.4,461.5 1000.7,460.1 1000.4,460.1 1000.0,460.0 991.6,459.9 974.4,459.6 948.6,459.1 914.3,458.6 890.0,458.2 888.6,458.0 871.4,456.5 863.0,455.8 862.9,455.8 700.0,441.4" fill="#7d4812"/><polygon points="871.4,427.3 888.8,472.7 806.8,451.4" fill="#7fd0c0" fill-opacity="0.22"/><polygon points="871.4,427.3 977.6,446.1 1008.7,479.3 888.8,472.7" fill="#2aa6a6"/><polygon points="880.6,450.8 991.9,461.5 1008.7,479.3 888.8,472.7" fill="#8fb08a" fill-opacity="0.42"/><polygon points="912.7,467.3 999.4,469.2 1012.6,482.9 1012.6,492.0 912.7,474.0" fill="#3a3153"/><polygon points="700.0,200.0 2100.0,200.0 2100.0,640.7 1817.4,605.1 1811.7,604.4 1800.4,602.9 1783.5,600.8 1760.8,597.9 1742.2,595.6 1727.5,593.7 1716.8,592.4 1710.1,591.5 1702.0,590.5 1692.6,589.5 1681.8,588.4 1669.7,587.1 1656.1,585.2 1641.1,582.6 1624.7,579.4 1606.8,575.4 1590.0,571.7 1574.3,568.1 1559.6,564.8 1546.1,561.7 1528.0,557.6 1505.5,552.6 1478.6,546.6 1447.1,539.7 1421.1,534.0 1400.4,529.6 1385.0,526.4 1375.0,524.4 1361.6,521.9 1344.7,518.8 1324.4,515.1 1300.7,510.9 1281.4,507.4 1266.4,504.6 1255.7,502.7 1249.4,501.4 1237.3,499.1 1219.2,495.7 1195.2,491.2 1165.4,485.6 1142.9,481.4 1127.9,478.6 1120.4,477.2 1120.2,477.1 1112.7,475.8 1097.8,473.2 1075.4,469.3 1045.7,464.0 1023.4,460.1 1008.4,457.5 1000.7,456.1 1000.4,456.1 991.6,454.6 974.4,451.8 948.6,447.7 914.3,442.1 888.6,437.9 871.4,435.2 862.9,433.8 700.0,407.4" fill="#2d7f32"/></g>
<clipPath id="c0"><polygon points="819.6,453.2 830.9,454.9 853.4,458.5 887.3,463.8 932.4,470.9 966.2,476.3 988.9,479.9 1000.4,481.7 1000.7,481.7 1008.4,483.0 1023.4,485.6 1045.7,489.5 1075.4,494.6 1097.8,498.5 1112.7,501.0 1120.2,502.3 1120.4,502.4 1127.9,504.2 1142.9,507.9 1165.4,513.4 1195.2,520.7 1219.2,526.6 1237.3,531.1 1249.4,534.2 1255.7,535.8 1266.4,538.2 1281.4,541.2 1300.7,544.9 1324.4,549.3 1344.7,553.0 1361.6,556.1 1375.0,558.5 1385.0,560.2 1400.4,563.2 1421.1,567.5 1447.1,573.2 1478.6,580.2 1505.5,586.2 1528.0,591.2 1546.1,595.2 1559.6,598.3 1574.3,601.3 1590.0,604.3 1606.8,607.4 1624.7,610.5 1641.1,613.1 1656.1,615.4 1669.7,617.3 1681.8,618.8 1691.8,620.1 1699.6,621.2 1705.4,622.1 1708.9,622.8 1714.0,623.2 1720.5,623.3 1728.5,623.1 1737.9,622.6 1747.0,622.5 1755.8,622.9 1764.3,623.7 1772.5,625.0 1778.6,626.0 1782.7,626.7 1784.7,627.0 1773.4,1068.0 839.3,886.9"/></clipPath><g clip-path="url(#c0)"><polygon points="819.6,453.2 830.9,454.9 853.4,458.5 887.3,463.8 932.4,470.9 966.2,476.3 988.9,479.9 1000.4,481.7 1000.7,481.7 1008.4,483.0 1023.4,485.6 1045.7,489.5 1075.4,494.6 1097.8,498.5 1112.7,501.0 1120.2,502.3 1120.4,502.4 1127.9,504.2 1142.9,507.9 1165.4,513.4 1195.2,520.7 1219.2,526.6 1237.3,531.1 1249.4,534.2 1255.7,535.8 1266.4,538.2 1281.4,541.2 1300.7,544.9 1324.4,549.3 1344.7,553.0 1361.6,556.1 1375.0,558.5 1385.0,560.2 1400.4,563.2 1421.1,567.5 1447.1,573.2 1478.6,580.2 1505.5,586.2 1528.0,591.2 1546.1,595.2 1559.6,598.3 1574.3,601.3 1590.0,604.3 1606.8,607.4 1624.7,610.5 1641.1,613.1 1656.1,615.4 1669.7,617.3 1681.8,618.8 1691.8,620.1 1699.6,621.2 1705.4,622.1 1708.9,622.8 1714.0,623.2 1720.5,623.3 1728.5,623.1 1737.9,622.6 1747.0,622.5 1755.8,622.9 1764.3,623.7 1772.5,625.0 1778.6,626.0 1782.7,626.7 1784.7,627.0 1773.4,1068.0 839.3,886.9" fill="#32a56e"/><polygon points="700.0,200.0 2100.0,200.0 2100.0,962.7 1790.0,903.5 1700.0,886.3 1440.0,836.9 820.0,724.6 700.0,702.9" fill="#a56363"/><polygon points="700.0,200.0 2100.0,200.0 2100.0,874.5 1790.0,817.0 1700.0,800.3 1440.0,753.0 1265.0,727.0 1034.0,682.6 820.0,647.8 700.0,628.3" fill="#3068a4"/><polygon points="700.0,200.0 2100.0,200.0 2100.0,754.4 1783.0,720.0 1700.0,711.0 1480.0,684.5 1380.0,672.2 1180.0,642.8 820.0,586.5 700.0,567.7" fill="#9c6e9c"/><polygon points="700.0,590.2 820.0,604.5 1180.0,647.4 1380.0,672.2 1480.0,685.5 1700.0,711.0 1783.0,720.0 2100.0,754.4 2100.0,766.6 1783.0,736.0 1700.0,728.0 1480.0,700.0 1380.0,687.0 1180.0,662.2 820.0,619.5 700.0,605.3" fill="#a5a500"/><polygon points="700.0,549.3 820.0,554.0 1000.0,561.0 1100.0,568.5 1180.0,579.5 1280.0,595.0 1380.0,611.0 1480.0,624.7 1600.0,637.0 1783.0,652.4 2100.0,679.1 2100.0,704.4 1783.0,678.8 1600.0,664.0 1480.0,653.2 1380.0,640.8 1280.0,622.0 1180.0,606.0 1120.0,596.6 1000.0,586.5 820.0,579.6 700.0,575.0" fill="#a5a500"/><polygon points="700.0,472.0 820.0,487.2 1180.0,532.9 1240.0,540.0 1530.0,576.0 2100.0,646.8 2100.0,671.0 1790.0,632.0 1527.0,598.9 1240.0,561.0 1180.0,552.3 820.0,506.1 700.0,490.7" fill="#a50000"/><polygon points="700.0,200.0 2100.0,200.0 2100.0,684.2 1784.7,634.0 1782.7,633.7 1778.6,633.0 1772.5,632.0 1764.3,630.7 1755.8,629.9 1747.0,629.5 1737.9,629.6 1728.5,630.1 1720.5,630.3 1714.0,630.2 1708.9,629.8 1705.4,629.1 1699.6,628.2 1691.8,627.1 1681.8,625.8 1669.7,624.3 1656.1,622.4 1641.1,620.1 1624.7,617.5 1606.8,614.4 1590.0,611.3 1574.3,608.3 1559.6,605.3 1546.1,602.2 1528.0,598.2 1505.5,593.2 1478.6,587.2 1447.1,580.2 1421.1,574.5 1400.4,570.2 1385.0,567.2 1375.0,565.5 1361.6,563.1 1344.7,560.0 1324.4,556.3 1300.7,551.9 1281.4,548.2 1266.4,545.2 1255.7,542.8 1249.4,541.2 1237.3,538.1 1219.2,533.6 1195.2,527.7 1165.4,520.4 1150.0,516.6 1142.9,515.0 1127.9,511.4 1120.4,509.6 1120.2,509.6 1112.7,508.3 1097.8,505.9 1075.4,502.2 1045.7,497.3 1023.4,493.6 1008.4,491.1 1000.7,489.8 1000.4,489.8 988.9,488.1 966.2,484.7 932.4,479.6 887.3,472.8 853.4,467.7 830.9,464.4 819.6,462.7 700.0,444.7" fill="#7d4812"/><polygon points="700.0,200.0 2100.0,200.0 2100.0,684.2 1784.7,634.0 1782.7,633.7 1778.6,633.0 1772.5,632.0 1764.3,630.7 1755.8,629.9 1747.0,629.5 1737.9,629.6 1728.5,630.1 1720.5,630.3 1714.0,630.2 1708.9,629.8 1705.4,629.1 1699.6,628.2 1691.8,627.1 1681.8,625.8 1669.7,624.3 1656.1,622.4 1641.1,620.1 1624.7,617.5 1606.8,614.4 1590.0,611.3 1574.3,608.3 1559.6,605.3 1546.1,602.2 1528.0,598.2 1505.5,593.2 1478.6,587.2 1447.1,580.2 1421.1,574.5 1400.4,570.2 1385.0,567.2 1375.0,565.5 1361.6,563.1 1344.7,560.0 1324.4,556.3 1300.7,551.9 1281.4,548.2 1266.4,545.2 1255.7,542.8 1249.4,541.2 1237.3,538.1 1219.2,533.6 1195.2,527.7 1165.4,520.4 1142.9,514.9 1127.9,511.2 1120.4,509.4 1120.2,509.3 1112.7,508.0 1097.8,505.5 1075.4,501.6 1045.7,496.5 1023.4,492.6 1008.4,490.0 1000.7,488.7 1000.4,488.7 988.9,486.9 966.2,483.3 932.4,477.9 887.3,470.8 853.4,465.5 830.9,461.9 819.6,460.2 700.0,441.3" fill="#2d7f32"/></g>
<clipPath id="cf"><polygon points="797.5,467.0 821.0,478.5 860.0,484.3 1000.0,505.5 1100.0,521.5 1180.0,539.4 1240.0,551.8 1380.0,584.6 1480.0,606.6 1600.0,627.0 1700.0,641.0 1768.0,647.0 1757.4,1085.5 817.6,902.4"/></clipPath>
<clipPath id="ce"><polygon points="1768.0,647.0 1784.7,627.0 1817.4,598.1 1848.8,566.6 1880.3,537.7 1910.4,508.8 1939.4,478.6 1968.3,451.0 1995.9,422.1 2022.3,400.2 2035.5,385.0 2018.0,797.5 1757.4,1085.5"/></clipPath>
<polygon points="797.5,467.0 821.0,478.5 860.0,484.3 1000.0,505.5 1100.0,521.5 1180.0,539.4 1240.0,551.8 1380.0,584.6 1480.0,606.6 1600.0,627.0 1700.0,641.0 1768.0,647.0 1784.7,627.0 1817.4,598.1 1848.8,566.6 1880.3,537.7 1910.4,508.8 1939.4,478.6 1968.3,451.0 1995.9,422.1 2022.3,400.2 2035.5,385.0 2035.5,385.0 2032.6,388.0 2027.1,387.6 2018.9,387.0 2008.0,386.2 1997.4,385.1 1987.2,383.7 1977.3,381.9 1967.8,379.8 1958.3,377.8 1948.9,376.0 1939.6,374.5 1930.4,373.0 1918.8,371.4 1904.8,369.6 1888.4,367.5 1869.7,365.3 1855.2,363.5 1844.9,362.3 1838.8,361.5 1836.9,361.3 1828.2,360.0 1812.6,357.8 1790.0,354.5 1760.6,350.3 1738.5,347.0 1723.6,344.9 1715.9,343.8 1715.5,343.7 1707.7,342.7 1692.6,340.7 1670.1,337.7 1640.2,333.8 1617.6,330.8 1602.2,328.8 1594.0,327.6 1593.0,327.5 1587.6,326.4 1577.7,324.5 1563.4,321.6 1544.7,317.9 1524.3,314.0 1502.5,310.1 1479.0,306.1 1454.0,302.1 1432.8,298.6 1415.3,295.8 1401.6,293.7 1391.7,292.1 1383.8,290.9 1378.0,289.9 1374.2,289.3 1372.5,289.1 1365.8,288.2 1354.0,286.9 1337.1,284.9 1315.3,282.4 1297.3,280.3 1283.2,278.6 1273.1,277.4 1266.8,276.5 1255.8,275.0 1240.0,272.9 1219.5,270.1 1194.2,266.7 1175.2,264.2 1162.5,262.5 1154.5,262.0" fill="#2d7f32" fill-opacity="0.22"/>
<g clip-path="url(#ce)" opacity="0.27"><polygon points="1740.0,1300.0 2060.0,1300.0 2060.0,696.1 2019.4,725.2 1940.0,781.9 1880.0,824.8 1820.0,867.7 1770.0,903.5 1740.0,924.9" fill="#32a56e"/><polygon points="1740.0,841.4 1770.0,820.0 1820.0,784.3 1880.0,741.5 1940.0,698.7 2019.4,642.1 2060.0,613.2 2060.0,696.1 2019.4,725.2 1940.0,781.9 1880.0,824.8 1820.0,867.7 1770.0,903.5 1740.0,924.9" fill="#a56363"/><polygon points="1740.0,758.6 1770.0,740.2 1820.0,709.6 1880.0,672.7 1940.0,635.9 2019.4,587.2 2060.0,562.3 2060.0,613.2 2019.4,642.1 1940.0,698.7 1880.0,741.5 1820.0,784.3 1770.0,820.0 1740.0,841.4" fill="#3068a4"/><polygon points="1740.0,660.9 1770.0,638.0 1820.0,599.8 1880.0,561.9 1940.0,523.9 2019.4,475.0 2060.0,450.0 2060.0,562.3 2019.4,587.2 1940.0,635.9 1880.0,672.7 1820.0,709.6 1770.0,740.2 1740.0,758.6" fill="#9c6e9c"/><polygon points="1740.0,100.0 2060.0,100.0 2060.0,450.0 2019.4,475.0 1940.0,523.9 1880.0,561.9 1820.0,599.8 1770.0,638.0 1740.0,660.9" fill="#7d4812"/><polygon points="1740.0,713.4 1905.0,729.9 1905.0,749.9 1740.0,731.0" fill="#a5a500"/><polygon points="1740.0,627.6 1770.0,643.3 1820.0,669.4 1880.0,700.8 1940.0,732.1 2019.4,773.6 2060.0,794.8 2060.0,819.2 2019.4,798.3 1940.0,757.4 1880.0,726.5 1820.0,695.6 1770.0,669.9 1740.0,654.4" fill="#a5a500"/><polygon points="1768.0,632.0 1785.3,619.7 2060.0,654.0 2060.0,667.3" fill="#a50000"/></g>
<clipPath id="ces"><polygon points="1784.7,627.0 1784.7,627.0 1817.4,598.1 1848.8,566.6 1880.3,537.7 1910.4,508.8 1939.4,478.6 1968.3,451.0 1995.9,422.1 2022.3,400.2 2005.0,812.0 1979.3,840.7 1952.0,869.8 1924.0,901.2 1895.0,932.6 1865.3,965.6 1835.5,998.7 1805.0,1033.4 1773.4,1068.0 1773.4,1068.0"/></clipPath>
<g clip-path="url(#ces)"><polygon points="1785.3,619.7 2040.0,651.5 2040.0,664.9 1784.6,634.0" fill="#a50000"/></g>
<g clip-path="url(#cf)" opacity="0.27"><polygon points="760.0,1200.0 1800.0,1200.0 1800.0,920.6 1773.5,915.5 1683.0,898.0 1421.5,847.8 798.0,733.6 760.0,726.6" fill="#32a56e"/><polygon points="760.0,650.5 798.0,656.8 1013.2,692.3 1245.5,737.4 1421.5,763.9 1683.0,812.0 1773.5,829.0 1800.0,834.0 1800.0,920.6 1773.5,915.5 1683.0,898.0 1421.5,847.8 798.0,733.6 760.0,726.6" fill="#a56363"/><polygon points="760.0,589.5 798.0,595.5 1160.1,652.9 1361.2,682.9 1461.8,695.6 1683.0,722.7 1766.5,732.0 1800.0,735.7 1800.0,834.0 1773.5,829.0 1683.0,812.0 1421.5,763.9 1245.5,737.4 1013.2,692.3 798.0,656.8 760.0,650.5" fill="#3068a4"/><polygon points="760.0,448.7 797.5,467.0 821.0,478.5 860.0,484.3 1000.0,505.5 1100.0,521.5 1180.0,539.4 1240.0,551.8 1380.0,584.6 1480.0,606.6 1600.0,627.0 1700.0,641.0 1768.0,647.0 1800.0,652.0 1800.0,735.7 1766.5,732.0 1683.0,722.7 1461.8,695.6 1361.2,682.9 1160.1,652.9 798.0,595.5 760.0,589.5" fill="#9c6e9c"/><polygon points="760.0,598.0 798.0,602.5 1160.1,645.8 1361.2,670.8 1461.8,684.2 1683.0,709.9 1766.5,719.0 1800.0,722.6 1800.0,738.2 1766.5,735.0 1683.0,726.9 1461.8,698.7 1361.2,685.6 1160.1,660.6 798.0,617.5 760.0,613.0" fill="#a5a500"/><polygon points="760.0,543.5 798.0,545.0 979.0,552.2 1079.6,559.8 1160.1,570.9 1260.6,586.5 1361.2,602.6 1461.8,616.4 1582.4,628.8 1766.5,644.4 1800.0,647.2 1800.0,673.5 1766.5,670.8 1582.4,655.8 1461.8,644.9 1361.2,632.4 1260.6,613.5 1160.1,597.4 1099.7,587.9 979.0,577.7 798.0,570.6 760.0,569.1" fill="#a5a500"/><polygon points="760.0,479.6 820.0,487.2 1180.0,532.9 1240.0,540.0 1530.0,576.0 1800.0,609.5 1800.0,633.3 1790.0,632.0 1527.0,598.9 1240.0,561.0 1180.0,552.3 820.0,506.1 760.0,498.4" fill="#a50000"/><polygon points="760.0,448.7 797.5,467.0 821.0,478.5 860.0,484.3 1000.0,505.5 1100.0,521.5 1180.0,539.4 1240.0,551.8 1380.0,584.6 1480.0,606.6 1600.0,627.0 1700.0,641.0 1768.0,647.0 1800.0,652.0 1800.0,652.0 1768.0,647.0 1700.0,641.0 1600.0,627.0 1480.0,606.6 1380.0,584.6 1240.0,551.8 1180.0,539.4 1100.0,521.5 1000.0,505.5 860.0,484.3 821.0,478.5 797.5,467.0 760.0,448.7" fill="#7d4812"/><polygon points="760.0,448.6 797.5,467.0 821.0,478.5 860.0,484.3 1000.0,505.5 1100.0,521.5 1180.0,539.4 1240.0,551.8 1380.0,584.6 1480.0,606.6 1600.0,627.0 1700.0,641.0 1768.0,647.0 1800.0,652.0 1800.0,652.0 1768.0,647.0 1700.0,641.0 1600.0,627.0 1480.0,606.6 1380.0,584.6 1240.0,551.8 1180.0,539.4 1100.0,521.5 1000.0,505.5 860.0,484.3 821.0,478.5 797.5,467.0 760.0,448.7" fill="#2d7f32"/></g>
<polygon points="1265.0,552.0 1283.0,556.0 1285.0,993.0 1268.0,990.0" fill="#ffffff" fill-opacity="0.055"/>
<polyline points="1266,553 1300,530 1336,500 1380,459 1431,419 1465,394 1512,365 1565,338 1580,327.5" fill="none" stroke="#3d8f42" stroke-opacity="0.7" stroke-width="6.5"/>
<polygon points="1146.5,856.0 1150.0,852.0 1180.6,847.3 1215.0,847.0 1248.1,849.5 1298.7,851.2 1349.4,862.2 1400.0,875.7 1450.6,892.6 1484.4,909.4 1509.7,929.7 1520.0,942.0 1524.9,953.3 1526.6,966.8 1521.5,982.0 1509.7,997.2 1496.0,1006.0 1484.4,1011.5 1476.0,1010.3 1153.6,947.8 1146.0,940.0" fill="#5a477c" fill-opacity="0.97"/>
<polygon points="1190.0,935.0 1209.3,930.9 1268.4,931.4 1315.6,936.4 1366.2,948.2 1416.9,965.1 1450.6,982.0 1467.5,997.2 1474.2,1010.7 1476.0,1010.3 1160.0,949.1" fill="#5e2274" fill-opacity="0.96"/>
<polygon points="1153.6,947.8 1476.0,1010.3 1478.5,1031.9 1152.8,968.1" fill="#1a1258" fill-opacity="0.95"/>
<polygon points="1267.5,849.5 1286.1,850.0 1269.2,928.0" fill="#4a8a78" fill-opacity="0.9"/>
<clipPath id="cq"><polygon points="835.0,533.9 874.7,659.6 953.7,767.4 1043.5,860.7 1140.5,953.4 1226.7,961.3 1169.2,882.3 1115.3,814.0 1061.4,731.4 1006.0,646.0 969.7,600.0 932.0,566.0 900.0,538.0 867.5,510.5"/></clipPath>
<polygon points="835.0,533.9 874.7,659.6 953.7,767.4 1043.5,860.7 1140.5,953.4 1153.8,952.4 1133.3,926.0 1039.9,823.0 982.4,758.0 899.8,660.0 849.5,598.5 840.0,560.0" fill="#8fe0d0" fill-opacity="0.24"/><polygon points="835.0,508.7 840.0,560.0 849.5,598.5 899.8,660.0 982.4,758.0 1039.9,823.0 1133.3,926.0 1153.8,952.4 1226.7,961.3 1169.2,882.3 1115.3,814.0 1061.4,731.4 1006.0,646.0 969.7,600.0 932.0,566.0 900.0,538.0 867.5,510.5" fill="#58c4c2" fill-opacity="0.74"/><polygon points="849.5,598.5 899.8,660.0 982.4,758.0 1039.9,823.0 1050.0,818.0 995.0,748.0 914.0,650.0 864.0,600.0" fill="#1c9c9e" fill-opacity="0.8"/>
<g clip-path="url(#c0)"><g clip-path="url(#cq)"><polygon points="815.0,553.8 820.0,554.0 1000.0,561.0 1100.0,568.5 1180.0,579.5 1260.0,591.9 1260.0,618.8 1180.0,606.0 1120.0,596.6 1000.0,586.5 820.0,579.6 815.0,579.4" fill="#a5a500"/><polygon points="815.0,603.9 820.0,604.5 1180.0,647.4 1260.0,657.3 1260.0,672.1 1180.0,662.2 820.0,619.5 815.0,618.9" fill="#a5a500"/><polygon points="815.0,486.6 820.0,487.2 1180.0,532.9 1240.0,540.0 1260.0,542.5 1260.0,563.6 1240.0,561.0 1180.0,552.3 820.0,506.1 815.0,505.5" fill="#a50000"/></g></g>
<path d="M794.5 409 L817.6 902.4" stroke="#1030ff" stroke-width="1.2" fill="none"/>
<path d="M817.6 902.4 L1806.9 1096.2" stroke="#ff1010" stroke-width="1.2" fill="none"/>
<path d="M817.6 902.4 L839.3 886.9" stroke="#20d020" stroke-width="1" fill="none"/>
<path d="M830.5 847.5 h5 M833 845 v5" stroke="#70d070" stroke-width="0.8" fill="none"/>
<rect x="814.1" y="876.8" width="5" height="5" fill="#1030ff"/>
<text x="789.6" y="885.3" font-size="11.5" fill="#8d95f0" text-anchor="start" font-weight="normal" textLength="23.7" lengthAdjust="spacingAndGlyphs">+200</text>
<rect x="809.9" y="800.3" width="5" height="5" fill="#1030ff"/>
<text x="785.4" y="808.8" font-size="11.5" fill="#8d95f0" text-anchor="start" font-weight="normal" textLength="23.7" lengthAdjust="spacingAndGlyphs">+300</text>
<rect x="806.8" y="720.9" width="5" height="5" fill="#1030ff"/>
<text x="782.3" y="729.4" font-size="11.5" fill="#8d95f0" text-anchor="start" font-weight="normal" textLength="23.7" lengthAdjust="spacingAndGlyphs">+400</text>
<rect x="803.0" y="641.6" width="5" height="5" fill="#1030ff"/>
<text x="778.5" y="650.1" font-size="11.5" fill="#8d95f0" text-anchor="start" font-weight="normal" textLength="23.7" lengthAdjust="spacingAndGlyphs">+500</text>
<rect x="798.9" y="562.0" width="5" height="5" fill="#1030ff"/>
<text x="774.4" y="570.5" font-size="11.5" fill="#8d95f0" text-anchor="start" font-weight="normal" textLength="23.7" lengthAdjust="spacingAndGlyphs">+600</text>
<rect x="794.7" y="481.3" width="5" height="5" fill="#1030ff"/>
<text x="770.2" y="489.8" font-size="11.5" fill="#8d95f0" text-anchor="start" font-weight="normal" textLength="23.7" lengthAdjust="spacingAndGlyphs">+700</text>
<text x="770.5" y="401.3" font-size="12" fill="#8d95f0" text-anchor="start" font-weight="normal" textLength="37.0" lengthAdjust="spacingAndGlyphs">Elev (Z)</text>
<rect x="815.1" y="899.9" width="5" height="5" fill="#ff1010"/>
<text x="774.3" y="917.4" font-size="12" fill="#f0a0a0" text-anchor="start" font-weight="normal" textLength="41.6" lengthAdjust="spacingAndGlyphs">+543700</text>
<rect x="887.8" y="914.1" width="5" height="5" fill="#ff1010"/>
<text x="847.0" y="931.6" font-size="12" fill="#f0a0a0" text-anchor="start" font-weight="normal" textLength="41.6" lengthAdjust="spacingAndGlyphs">+543800</text>
<rect x="962.0" y="928.9" width="5" height="5" fill="#ff1010"/>
<text x="921.2" y="946.4" font-size="12" fill="#f0a0a0" text-anchor="start" font-weight="normal" textLength="41.6" lengthAdjust="spacingAndGlyphs">+543900</text>
<rect x="1036.1" y="943.0" width="5" height="5" fill="#ff1010"/>
<text x="995.3" y="960.5" font-size="12" fill="#f0a0a0" text-anchor="start" font-weight="normal" textLength="41.6" lengthAdjust="spacingAndGlyphs">+544000</text>
<rect x="1112.3" y="957.8" width="5" height="5" fill="#ff1010"/>
<text x="1071.5" y="975.3" font-size="12" fill="#f0a0a0" text-anchor="start" font-weight="normal" textLength="41.6" lengthAdjust="spacingAndGlyphs">+544100</text>
<rect x="1188.9" y="973.0" width="5" height="5" fill="#ff1010"/>
<text x="1148.1" y="990.5" font-size="12" fill="#f0a0a0" text-anchor="start" font-weight="normal" textLength="41.6" lengthAdjust="spacingAndGlyphs">+544200</text>
<rect x="1265.8" y="988.2" width="5" height="5" fill="#ff1010"/>
<text x="1225.0" y="1005.7" font-size="12" fill="#f0a0a0" text-anchor="start" font-weight="normal" textLength="41.6" lengthAdjust="spacingAndGlyphs">+544300</text>
<rect x="1345.1" y="1003.7" width="5" height="5" fill="#ff1010"/>
<text x="1304.3" y="1021.2" font-size="12" fill="#f0a0a0" text-anchor="start" font-weight="normal" textLength="41.6" lengthAdjust="spacingAndGlyphs">+544400</text>
<rect x="1425.1" y="1019.2" width="5" height="5" fill="#ff1010"/>
<text x="1384.3" y="1036.7" font-size="12" fill="#f0a0a0" text-anchor="start" font-weight="normal" textLength="41.6" lengthAdjust="spacingAndGlyphs">+544500</text>
<rect x="1505.8" y="1035.1" width="5" height="5" fill="#ff1010"/>
<text x="1465.0" y="1052.6" font-size="12" fill="#f0a0a0" text-anchor="start" font-weight="normal" textLength="41.6" lengthAdjust="spacingAndGlyphs">+544600</text>
<rect x="1587.8" y="1050.9" width="5" height="5" fill="#ff1010"/>
<text x="1547.0" y="1068.4" font-size="12" fill="#f0a0a0" text-anchor="start" font-weight="normal" textLength="41.6" lengthAdjust="spacingAndGlyphs">+544700</text>
<rect x="1670.9" y="1067.2" width="5" height="5" fill="#ff1010"/>
<text x="1630.1" y="1084.7" font-size="12" fill="#f0a0a0" text-anchor="start" font-weight="normal" textLength="41.6" lengthAdjust="spacingAndGlyphs">+544800</text>
<text x="1812.3" y="1107.3" font-size="12" fill="#f0a0a0" text-anchor="start" font-weight="normal" textLength="39.3" lengthAdjust="spacingAndGlyphs">East (X)</text>
<text x="2476.9" y="116.4" font-size="11.5" fill="#fff" text-anchor="start" font-weight="bold" textLength="40.7" lengthAdjust="spacingAndGlyphs">Geology</text>
<text x="2476.9" y="129.0" font-size="11.5" fill="#fff" text-anchor="start" font-weight="bold" textLength="31.1" lengthAdjust="spacingAndGlyphs">Model</text>
<rect x="2536" y="107" width="11" height="9" fill="#d9534f"/><path d="M2538 108.5 L2545 114.5 M2545 108.5 L2538 114.5" stroke="#fff" stroke-width="1"/>
<rect x="2477" y="139" width="20" height="20" fill="#ffffff"/>
<text x="2500.0" y="152.0" font-size="11.5" fill="#fff" text-anchor="start" font-weight="bold" textLength="45.0" lengthAdjust="spacingAndGlyphs">Unknown</text>
<rect x="2477" y="161" width="20" height="20" fill="#c06f1c"/>
<text x="2500.0" y="174.0" font-size="11.5" fill="#fff" text-anchor="start" font-weight="bold" textLength="13.0" lengthAdjust="spacingAndGlyphs">D1</text>
<rect x="2477" y="183" width="20" height="20" fill="#f5abf5"/>
<text x="2500.0" y="196.0" font-size="11.5" fill="#fff" text-anchor="start" font-weight="bold" textLength="13.0" lengthAdjust="spacingAndGlyphs">D2</text>
<rect x="2477" y="205" width="20" height="20" fill="#4a9eff"/>
<text x="2500.0" y="218.0" font-size="11.5" fill="#fff" text-anchor="start" font-weight="bold" textLength="13.0" lengthAdjust="spacingAndGlyphs">D3</text>
<rect x="2477" y="227" width="20" height="20" fill="#ff9a9a"/>
<text x="2500.0" y="240.0" font-size="11.5" fill="#fff" text-anchor="start" font-weight="bold" textLength="13.0" lengthAdjust="spacingAndGlyphs">D4</text>
<rect x="2477" y="249" width="20" height="20" fill="#50ffae"/>
<text x="2500.0" y="262.0" font-size="11.5" fill="#fff" text-anchor="start" font-weight="bold" textLength="13.0" lengthAdjust="spacingAndGlyphs">D5</text>
<rect x="2477" y="271" width="20" height="20" fill="#ffff00"/>
<text x="2500.0" y="284.0" font-size="11.5" fill="#fff" text-anchor="start" font-weight="bold" textLength="24.3" lengthAdjust="spacingAndGlyphs">Dyke</text>
<rect x="2477" y="293" width="20" height="20" fill="#90ee90"/>
<text x="2500.0" y="306.0" font-size="11.5" fill="#fff" text-anchor="start" font-weight="bold" textLength="32.8" lengthAdjust="spacingAndGlyphs">Dyke 1</text>
<rect x="2477" y="315" width="20" height="20" fill="#ffc0cb"/>
<text x="2500.0" y="328.0" font-size="11.5" fill="#fff" text-anchor="start" font-weight="bold" textLength="32.8" lengthAdjust="spacingAndGlyphs">Dyke 2</text>
<rect x="2477" y="337" width="20" height="20" fill="#9639b4"/>
<text x="2500.0" y="350.0" font-size="11.5" fill="#fff" text-anchor="start" font-weight="bold" textLength="21.5" lengthAdjust="spacingAndGlyphs">GnD</text>
<rect x="2477" y="359" width="20" height="20" fill="#48c44e"/>
<text x="2500.0" y="372.0" font-size="11.5" fill="#fff" text-anchor="start" font-weight="bold" textLength="22.1" lengthAdjust="spacingAndGlyphs">OVB</text>
<rect x="2477" y="381" width="20" height="20" fill="#40ffff"/>
<text x="2500.0" y="394.0" font-size="11.5" fill="#fff" text-anchor="start" font-weight="bold" textLength="19.8" lengthAdjust="spacingAndGlyphs">QzP</text>
<rect x="2477" y="403" width="20" height="20" fill="#ff0000"/>
<text x="2500.0" y="416.0" font-size="11.5" fill="#fff" text-anchor="start" font-weight="bold" textLength="20.9" lengthAdjust="spacingAndGlyphs">Vein</text>
<text x="2431.4" y="1145.9" font-size="11" fill="#fff" text-anchor="start" font-weight="normal" textLength="53.6" lengthAdjust="spacingAndGlyphs">Plunge +21</text>
<text x="2431.4" y="1158.9" font-size="11" fill="#fff" text-anchor="start" font-weight="normal" textLength="61.6" lengthAdjust="spacingAndGlyphs">Azimuth 336</text>
<defs><radialGradient id="gl" cx="0.55" cy="0.55" r="0.6"><stop offset="0" stop-color="#7fe8ff"/><stop offset="0.25" stop-color="#30b8e8"/><stop offset="1" stop-color="#1a6fb0"/></radialGradient><radialGradient id="gg" cx="0.5" cy="0.2" r="0.9"><stop offset="0" stop-color="#22b050"/><stop offset="1" stop-color="#0a6a2a"/></radialGradient><clipPath id="cg"><circle cx="2523" cy="1142" r="19.6"/></clipPath></defs>
<g clip-path="url(#cg)"><rect x="2500" y="1120" width="46" height="46" fill="url(#gl)"/><path d="M2500 1146 Q2523 1153 2546 1146 V1166 H2500 Z" fill="url(#gg)"/><text x="2507.0" y="1154.0" font-size="17" fill="#111" text-anchor="start" font-weight="bold">S</text><text x="2538.5" y="1150.0" font-size="15" fill="#111" text-anchor="start" font-weight="bold">E</text></g></svg>
<div class="b" style="left:310px;top:99px;width:2238px;height:1px;background:#ffffff"></div>
<div class="b" style="left:310px;top:100px;width:2238px;height:1px;background:#d6d4ce"></div>
<div class="b" style="left:309px;top:61px;width:1px;height:1111px;background:#b8b8b8"></div>
<div class="b" style="left:310px;top:1172px;width:2238px;height:6px;background:#fbfbfb;"></div>
<svg class="b" style="left:1420px;top:1173px;" width="24" height="5" viewBox="0 0 24 5"><path d="M1 1.5 H23 M1 3.5 H23" stroke="#999" stroke-width="1" stroke-dasharray="1 1"/></svg>
<div class="b" style="left:309px;top:1178px;width:1870px;height:192px;background:#f7f7f7;border:1px solid #b4b4b4;box-sizing:border-box;"></div>
<div class="b" style="left:310px;top:1207px;width:1868px;height:28px;background:#ffffff;"></div>
<div class="b" style="left:310px;top:1235px;width:1868px;height:28px;background:#b3e5fc;"></div>
<svg class="b" style="left:321.5px;top:1186.5px;" width="17" height="12" viewBox="0 0 17 12"><path d="M1 6 Q8.2 -2.5 15.4 6 Q8.2 14.5 1 6 Z" fill="#2a5f88"/><circle cx="8.2" cy="6" r="3.3" fill="#fff"/><circle cx="8.2" cy="6" r="1.9" fill="#2a5f88"/></svg>
<svg class="b" style="left:360px;top:1183.0px;" width="19" height="19" viewBox="0 0 19 19"><path d="M9.5 1 L17.5 5 V14 L9.5 18 L1.5 14 V5 Z" fill="#f1f1f1" stroke="#bbb" stroke-width=".8"/><path d="M4.5 5 L13 3.5 L14.5 13.5 L6 15 Z" fill="#f4c21f" stroke="#c8960a" stroke-width=".6"/><text x="9.6" y="12.3" font-family="Liberation Sans, sans-serif" font-size="8" font-weight="bold" fill="#3a3a00" text-anchor="middle">S</text></svg>
<div class="t" style="left:382.0px;top:1186.1px;font-size:13px;line-height:13px;color:#1f2a33;transform:scaleX(0.9006);">544,300 East</div>
<svg class="b" style="left:1203px;top:1185.5px;" width="14" height="14" viewBox="0 0 14 14"><path d="M1 1 L13 13 M13 1 L1 13" stroke="#2a5f88" stroke-width="1.2"/></svg>
<svg class="b" style="left:1237.5px;top:1183.0px;" width="19" height="19" viewBox="0 0 19 19"><path d="M9.5 1 L17.5 4.5 V14 L9.5 18 L1.5 14 V4.5 Z" fill="#eef1f3" stroke="#9aa7b0" stroke-width=".8"/><path d="M1.5 4.5 L9.5 8.5 L17.5 4.5 M9.5 8.5 V18" fill="none" stroke="#9aa7b0" stroke-width=".8"/><path d="M9.5 8.5 L17.5 4.5 V14 L9.5 18 Z" fill="#5c93ad"/><path d="M3.5 7 V15 M5.5 8 V16 M7.5 9 V17" stroke="#8a99a3" stroke-width=".9"/><path d="M10 12 H18 V14 H10 Z M10 15 H18 V17 H10 Z" fill="#e4b43a" stroke="#b98a1a" stroke-width=".4"/></svg>
<div class="t" style="left:1259.8px;top:1186.1px;font-size:13px;line-height:13px;color:#1f2a33;transform:scaleX(0.9138);">Geology Model</div>
<svg class="b" style="left:1585px;top:1188.5px;" width="14" height="10" viewBox="0 0 14 10"><path d="M2 2.5 L6.5 7 L11 2.5" fill="none" stroke="#777" stroke-width="1.1"/></svg>
<div class="b" style="left:1611px;top:1180.0px;width:112px;height:25.0px;background:#f5f5f5;border:1px solid #c6c6c6;box-sizing:border-box;"></div>
<div class="t" style="left:1634.7px;top:1186.1px;font-size:13px;line-height:13px;color:#1f2a33;transform:scaleX(0.9038);">Edit Colours</div>
<div class="b" style="left:1747px;top:1189.3px;width:271px;height:6.0px;background:#b9b9b9;border-radius:3px;"></div>
<div class="b" style="left:1747px;top:1189.3px;width:178.29999999999995px;height:6.0px;background:#234e6f;border-radius:3px;"></div>
<div class="b" style="left:1918.3px;top:1185.3px;width:14.0px;height:14.0px;background:#234e6f;border-radius:7px;"></div>
<div class="b" style="left:2146.5px;top:1180.5px;width:23.0px;height:23.5px;background:#d6f0fd;border:1px solid #4db8f0;box-sizing:border-box;"></div>
<svg class="b" style="left:2150px;top:1183.2px;" width="16" height="18" viewBox="0 0 16 18"><rect x="0.5" y="0.5" width="15" height="17" fill="#fff" stroke="#8a8a8a" stroke-width="1"/><path d="M6.5 4 H13 M6.5 7.5 H13 M6.5 11 H13 M6.5 14.5 H13" stroke="#8a8a8a" stroke-width="1.1"/><rect x="2.5" y="3" width="2.4" height="2.2" fill="#d33"/><rect x="2.5" y="6.5" width="2.4" height="2.2" fill="#3a7"/><rect x="2.5" y="10" width="2.4" height="2.2" fill="#36c"/><rect x="2.5" y="13.5" width="2.4" height="2.2" fill="#d33"/></svg>
<svg class="b" style="left:321.5px;top:1214.5px;" width="17" height="12" viewBox="0 0 17 12"><path d="M1 6 Q8.2 -2.5 15.4 6 Q8.2 14.5 1 6 Z" fill="#2a5f88"/><circle cx="8.2" cy="6" r="3.3" fill="#fff"/><circle cx="8.2" cy="6" r="1.9" fill="#2a5f88"/></svg>
<svg class="b" style="left:360px;top:1211.0px;" width="19" height="19" viewBox="0 0 19 19"><g fill="#f4c21f" stroke="#c8960a" stroke-width=".6"><path d="M1 4 L4 2.5 V15.5 L1 14 Z"/><path d="M4.5 3.5 L7.5 2 V16.5 L4.5 15 Z"/><path d="M8 3 L11 1.5 V17.5 L8 16 Z"/><path d="M10 7 L17.5 5.5 V16 L10 17.5 Z"/></g><text x="13.8" y="14.6" font-family="Liberation Sans, sans-serif" font-size="7.5" font-weight="bold" fill="#3a3a00" text-anchor="middle">S</text></svg>
<div class="t" style="left:382.0px;top:1214.1px;font-size:13px;line-height:13px;color:#1f2a33;transform:scaleX(0.9085);">4,317,500 North</div>
<svg class="b" style="left:1203px;top:1213.5px;" width="14" height="14" viewBox="0 0 14 14"><path d="M1 1 L13 13 M13 1 L1 13" stroke="#2a5f88" stroke-width="1.2"/></svg>
<svg class="b" style="left:1237.5px;top:1211.0px;" width="19" height="19" viewBox="0 0 19 19"><path d="M9.5 1 L17.5 4.5 V14 L9.5 18 L1.5 14 V4.5 Z" fill="#eef1f3" stroke="#9aa7b0" stroke-width=".8"/><path d="M1.5 4.5 L9.5 8.5 L17.5 4.5 M9.5 8.5 V18" fill="none" stroke="#9aa7b0" stroke-width=".8"/><path d="M9.5 8.5 L17.5 4.5 V14 L9.5 18 Z" fill="#5c93ad"/><path d="M3.5 7 V15 M5.5 8 V16 M7.5 9 V17" stroke="#8a99a3" stroke-width=".9"/><path d="M10 12 H18 V14 H10 Z M10 15 H18 V17 H10 Z" fill="#e4b43a" stroke="#b98a1a" stroke-width=".4"/></svg>
<div class="t" style="left:1259.8px;top:1214.1px;font-size:13px;line-height:13px;color:#1f2a33;transform:scaleX(0.9138);">Geology Model</div>
<svg class="b" style="left:1585px;top:1216.5px;" width="14" height="10" viewBox="0 0 14 10"><path d="M2 2.5 L6.5 7 L11 2.5" fill="none" stroke="#777" stroke-width="1.1"/></svg>
<div class="b" style="left:1611px;top:1208.0px;width:112px;height:25.0px;background:#f5f5f5;border:1px solid #c6c6c6;box-sizing:border-box;"></div>
<div class="t" style="left:1634.7px;top:1214.1px;font-size:13px;line-height:13px;color:#1f2a33;transform:scaleX(0.9038);">Edit Colours</div>
<div class="b" style="left:1747px;top:1217.3px;width:271px;height:6.0px;background:#b9b9b9;border-radius:3px;"></div>
<div class="b" style="left:1747px;top:1217.3px;width:271px;height:6.0px;background:#234e6f;border-radius:3px;"></div>
<div class="b" style="left:2011px;top:1213.3px;width:14px;height:14.0px;background:#234e6f;border-radius:7px;"></div>
<svg class="b" style="left:2150px;top:1211.2px;" width="16" height="18" viewBox="0 0 16 18"><rect x="0.5" y="0.5" width="15" height="17" fill="#fff" stroke="#8a8a8a" stroke-width="1"/><path d="M6.5 4 H13 M6.5 7.5 H13 M6.5 11 H13 M6.5 14.5 H13" stroke="#8a8a8a" stroke-width="1.1"/><rect x="2.5" y="3" width="2.4" height="2.2" fill="#d33"/><rect x="2.5" y="6.5" width="2.4" height="2.2" fill="#3a7"/><rect x="2.5" y="10" width="2.4" height="2.2" fill="#36c"/><rect x="2.5" y="13.5" width="2.4" height="2.2" fill="#d33"/></svg>
<svg class="b" style="left:321.5px;top:1242.5px;" width="17" height="12" viewBox="0 0 17 12"><path d="M1 6 Q8.2 -2.5 15.4 6 Q8.2 14.5 1 6 Z" fill="#2a5f88"/><circle cx="8.2" cy="6" r="3.3" fill="#fff"/><circle cx="8.2" cy="6" r="1.9" fill="#2a5f88"/></svg>
<svg class="b" style="left:360px;top:1239.0px;" width="19" height="19" viewBox="0 0 19 19"><path d="M9.5 1 L17.5 4.5 V14 L9.5 18 L1.5 14 V4.5 Z" fill="#eef1f3" stroke="#9aa7b0" stroke-width=".8"/><path d="M1.5 4.5 L9.5 8.5 L17.5 4.5 M9.5 8.5 V18" fill="none" stroke="#9aa7b0" stroke-width=".8"/><path d="M9.5 8.5 L17.5 4.5 V14 L9.5 18 Z" fill="#5c93ad"/><path d="M3.5 7 V15 M5.5 8 V16 M7.5 9 V17" stroke="#8a99a3" stroke-width=".9"/></svg>
<div class="t" style="left:382.0px;top:1242.1px;font-size:13px;line-height:13px;color:#1f2a33;transform:scaleX(0.9092);">Geology Model</div>
<svg class="b" style="left:1203px;top:1241.5px;" width="14" height="14" viewBox="0 0 14 14"><path d="M1 1 L13 13 M13 1 L1 13" stroke="#2a5f88" stroke-width="1.2"/></svg>
<svg class="b" style="left:1237.5px;top:1239.0px;" width="19" height="19" viewBox="0 0 19 19"><path d="M9.5 1 L17.5 4.5 V14 L9.5 18 L1.5 14 V4.5 Z" fill="#eef1f3" stroke="#9aa7b0" stroke-width=".8"/><path d="M1.5 4.5 L9.5 8.5 L17.5 4.5 M9.5 8.5 V18" fill="none" stroke="#9aa7b0" stroke-width=".8"/><path d="M9.5 8.5 L17.5 4.5 V14 L9.5 18 Z" fill="#5c93ad"/><path d="M3.5 7 V15 M5.5 8 V16 M7.5 9 V17" stroke="#8a99a3" stroke-width=".9"/></svg>
<div class="t" style="left:1259.8px;top:1242.1px;font-size:13px;line-height:13px;color:#1f2a33;transform:scaleX(0.9138);">Geology Model</div>
<svg class="b" style="left:1585px;top:1244.5px;" width="14" height="10" viewBox="0 0 14 10"><path d="M2 2.5 L6.5 7 L11 2.5" fill="none" stroke="#777" stroke-width="1.1"/></svg>
<div class="b" style="left:1611px;top:1236.0px;width:112px;height:25.0px;background:#f5f5f5;border:1px solid #c6c6c6;box-sizing:border-box;"></div>
<div class="t" style="left:1634.7px;top:1242.1px;font-size:13px;line-height:13px;color:#1f2a33;transform:scaleX(0.9038);">Edit Colours</div>
<div class="b" style="left:1747px;top:1245.3px;width:271px;height:6.0px;background:#b9b9b9;border-radius:3px;"></div>
<div class="b" style="left:1747px;top:1245.3px;width:32.40000000000009px;height:6.0px;background:#234e6f;border-radius:3px;"></div>
<div class="b" style="left:1772.4px;top:1241.3px;width:14.0px;height:14.0px;background:#234e6f;border-radius:7px;"></div>
<svg class="b" style="left:2150px;top:1239.2px;" width="16" height="18" viewBox="0 0 16 18"><rect x="0.5" y="0.5" width="15" height="17" fill="#fff" stroke="#8a8a8a" stroke-width="1"/><path d="M6.5 4 H13 M6.5 7.5 H13 M6.5 11 H13 M6.5 14.5 H13" stroke="#8a8a8a" stroke-width="1.1"/><rect x="2.5" y="3" width="2.4" height="2.2" fill="#d33"/><rect x="2.5" y="6.5" width="2.4" height="2.2" fill="#3a7"/><rect x="2.5" y="10" width="2.4" height="2.2" fill="#36c"/><rect x="2.5" y="13.5" width="2.4" height="2.2" fill="#d33"/></svg>
<div class="b" style="left:2042px;top:1237.0px;width:23.5px;height:23.0px;background:#8ed6f8;border:1px solid #35aeea;box-sizing:border-box;"></div>
<svg class="b" style="left:2044px;top:1239.5px;" width="20" height="18" viewBox="0 0 20 18"><path d="M4 1.5 L17 9 L4 16.5 Z" fill="#2a5f88"/></svg>
<svg class="b" style="left:2070px;top:1239.5px;" width="20" height="18" viewBox="0 0 20 18"><path d="M4 1.8 L16.5 9 L4 16.2 Z" fill="none" stroke="#2a5f88" stroke-width="1.3" stroke-linejoin="round"/></svg>
<div class="b" style="left:2179px;top:1178px;width:5px;height:192px;background:#fbfbfb;"></div>
<svg class="b" style="left:2179px;top:1264px;" width="6" height="22" viewBox="0 0 6 22"><path d="M1.5 1 V21 M3.5 1 V21" stroke="#999" stroke-width="1" stroke-dasharray="1 1"/></svg>
<div class="b" style="left:2184px;top:1178px;width:368px;height:192px;background:#f7f7f7;border:1px solid #b4b4b4;box-sizing:border-box;"></div>
<svg class="b" style="left:2198px;top:1183px;" width="19" height="19" viewBox="0 0 19 19"><path d="M9.5 1 L17.5 4.5 V14 L9.5 18 L1.5 14 V4.5 Z" fill="#eef1f3" stroke="#9aa7b0" stroke-width=".8"/><path d="M1.5 4.5 L9.5 8.5 L17.5 4.5 M9.5 8.5 V18" fill="none" stroke="#9aa7b0" stroke-width=".8"/><path d="M9.5 8.5 L17.5 4.5 V14 L9.5 18 Z" fill="#5c93ad"/><path d="M3.5 7 V15 M5.5 8 V16 M7.5 9 V17" stroke="#8a99a3" stroke-width=".9"/></svg>
<div class="t" style="left:2220.5px;top:1186.1px;font-size:13px;line-height:13px;color:#1f2a33;transform:scaleX(0.8597);font-weight:bold;">Geology Model</div>
<div class="t" style="left:2198.8px;top:1214.6px;font-size:13px;line-height:13px;color:#1f2a33;transform:scaleX(0.9099);">Slice mode:</div>
<div class="b" style="left:2269px;top:1209px;width:262px;height:24.5px;background:#ffffff;border:1px solid #c6c6c6;box-sizing:border-box;"></div>
<div class="t" style="left:2278.0px;top:1214.1px;font-size:13px;line-height:13px;color:#1f2a33;transform:scaleX(0.8997);">From Scene</div>
<svg class="b" style="left:2515px;top:1216px;" width="14" height="10" viewBox="0 0 14 10"><path d="M2 2.5 L6.5 7 L11 2.5" fill="none" stroke="#666" stroke-width="1.1"/></svg>
<div class="b" style="left:2199px;top:1244px;width:12px;height:12px;background:#2a5f88;border-radius:1.5px;"></div>
<svg class="b" style="left:2199px;top:1244px;" width="12" height="12" viewBox="0 0 12 12"><path d="M2.6 6.2 L5 8.6 L9.4 3.6" fill="none" stroke="#fff" stroke-width="1.4"/></svg>
<div class="t" style="left:2215.5px;top:1243.4px;font-size:13px;line-height:13px;color:#1f2a33;transform:scaleX(0.8971);">Fill Slicer</div>
<div class="b" style="left:0px;top:1370px;width:2548px;height:22px;background:#fafafa;"></div>
<svg class="b" style="left:1651px;top:1373px;" width="20" height="20" viewBox="0 0 20 20"><path d="M3.5 12.5 H14.5 L17.5 18.5 H1 Z" fill="none" stroke="#2a5f88" stroke-width="1.1"/><path d="M2.3 15.5 H16" stroke="#2a5f88" stroke-width=".9"/><path d="M9 13 L6.3 7.2 A3.2 3.2 0 1 1 11.7 7.2 Z" fill="#e8343a"/><circle cx="9" cy="5.6" r="1.2" fill="#fff"/></svg>
<div class="t" style="left:1674.0px;top:1375.2px;font-size:13px;line-height:13px;color:#1f2a33;transform:scaleX(0.9104);">Equal Earth (world)</div>
<svg class="b" style="left:1790px;top:1373px;" width="22" height="20" viewBox="0 0 22 20"><path d="M4 17 V3 M1.8 5.5 L4 3 L6.2 5.5" fill="none" stroke="#d33" stroke-width="1.2"/><path d="M4 17 H19 M16.5 14.8 L19 17 L16.5 19.2" fill="none" stroke="#3a8" stroke-width="1.2"/><path d="M4 17 L15 6 M11.5 6 H15 V9.5" fill="none" stroke="#2a5f88" stroke-width="1.2"/></svg>
<svg class="b" style="left:2032px;top:1373px;" width="20" height="20" viewBox="0 0 20 20"><path d="M3 17.5 L4 13.5 L13.5 4 L16.5 7 L7 16.5 Z M12 5.5 L15 8.5" fill="none" stroke="#2a5f88" stroke-width="1.2" stroke-linejoin="round"/></svg>
<div class="t" style="left:2054.7px;top:1375.2px;font-size:13px;line-height:13px;color:#1f2a33;transform:scaleX(0.8603);font-style:italic;">&lt;No Code&gt;</div>
<svg class="b" style="left:2203px;top:1374px;" width="20" height="18" viewBox="0 0 20 18"><rect x="1.5" y="2.5" width="16" height="10" fill="#6fbf9a" stroke="#5a9a7c" stroke-width="1"/><path d="M9.5 12.5 V15.5 M5 16 H14" stroke="#888" stroke-width="1.3"/></svg>
<div class="t" style="left:2225.9px;top:1375.2px;font-size:13px;line-height:13px;color:#1f2a33;transform:scaleX(0.9258);">Full Acceleration</div>
<div class="t" style="left:2371.0px;top:1375.2px;font-size:13px;line-height:13px;color:#1f2a33;transform:scaleX(0.8811);">21 FPS</div>
<svg class="b" style="left:2439px;top:1373px;" width="14" height="20" viewBox="0 0 14 20"><path d="M7 2.5 V18 M3 6.5 L7 2.5 L11 6.5 M3 14 L7 18 L11 14" fill="none" stroke="#5aa886" stroke-width="1.2"/></svg>
<div class="t" style="left:2458.8px;top:1375.2px;font-size:13px;line-height:13px;color:#1f2a33;transform:scaleX(0.8951);">Z-Scale 1.0</div>
</body></html>
